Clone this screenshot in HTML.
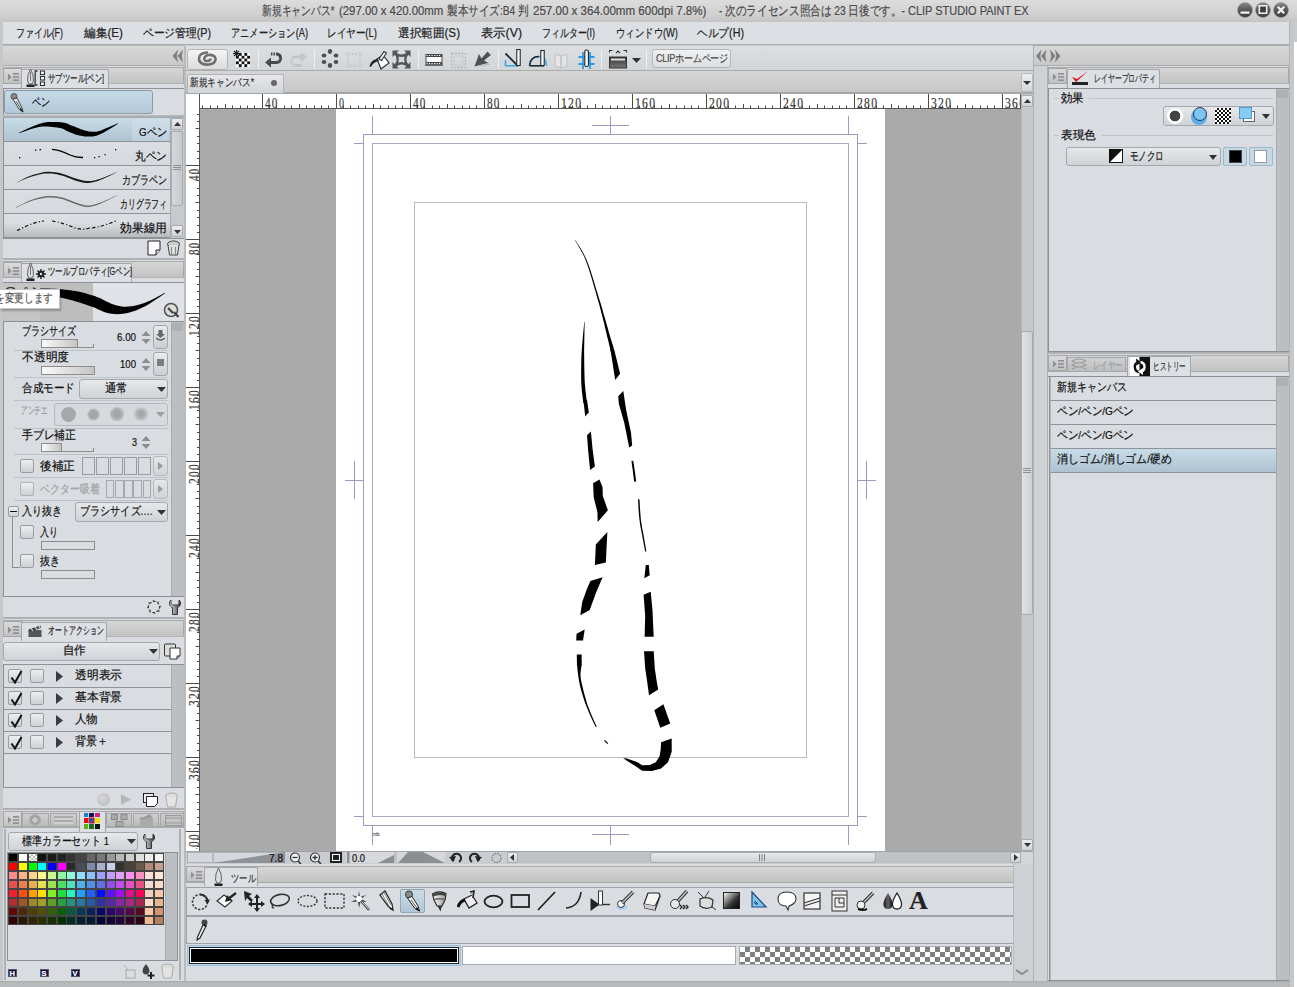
<!DOCTYPE html><html lang="ja"><head><meta charset="utf-8"><style>
*{margin:0;padding:0;box-sizing:border-box}
html,body{width:1297px;height:987px;overflow:hidden;background:#c9cacc}
body{position:relative;font-family:"Liberation Sans",sans-serif;font-size:12px;color:#111}
div,svg{position:absolute}
.t{white-space:nowrap;line-height:1;transform-origin:0 0;-webkit-text-stroke:0.2px currentColor}
.a{position:absolute}
</style></head><body><div style="left:0px;top:0px;width:1297px;height:987px;background:#c9cacc"></div>
<div style="left:0px;top:0px;width:1297px;height:22px;background:linear-gradient(#dcdcdc,#d2d2d2 60%,#c4c4c4)"></div>
<div class="t" style="transform:scaleX(0.7562);left:262.3px;top:5px;--w:72.5;color:#4a4a4a;font-size:12.5px">新規キャンバス*</div>
<div class="t" style="transform:scaleX(0.9097);left:339.4px;top:5px;--w:104.3;color:#4a4a4a;font-size:12.5px">(297.00 x 420.00mm</div>
<div class="t" style="transform:scaleX(0.814);left:447.4px;top:5px;--w:81.6;color:#4a4a4a;font-size:12.5px">製本サイズ:B4 判</div>
<div class="t" style="transform:scaleX(0.9242);left:533px;top:5px;--w:173.4;color:#4a4a4a;font-size:12.5px">257.00 x 364.00mm 600dpi 7.8%)</div>
<div class="t" style="transform:scaleX(0.817);left:718.5px;top:5px;--w:186;color:#4a4a4a;font-size:12.5px">- 次のライセンス照合は 23 日後です。-</div>
<div class="t" style="transform:scaleX(0.8768);left:908.4px;top:5px;--w:120.6;color:#4a4a4a;font-size:12.5px">CLIP STUDIO PAINT EX</div>
<svg style="left:1236.5px;top:2px" width="16" height="16" viewBox="0 0 16 16"><defs><linearGradient id="wbmin" x1="0" y1="0" x2="0" y2="1"><stop offset="0" stop-color="#8a8a8a"/><stop offset="0.45" stop-color="#5a5a5a"/><stop offset="1" stop-color="#3e3e3e"/></linearGradient></defs><circle cx="8" cy="8" r="7.5" fill="url(#wbmin)" stroke="#9a9a9a" stroke-width="0.6"/><rect x="3.5" y="9.5" width="9" height="2.2" fill="#f2f2f2"/></svg>
<svg style="left:1254.5px;top:2px" width="16" height="16" viewBox="0 0 16 16"><defs><linearGradient id="wbmax" x1="0" y1="0" x2="0" y2="1"><stop offset="0" stop-color="#8a8a8a"/><stop offset="0.45" stop-color="#5a5a5a"/><stop offset="1" stop-color="#3e3e3e"/></linearGradient></defs><circle cx="8" cy="8" r="7.5" fill="url(#wbmax)" stroke="#9a9a9a" stroke-width="0.6"/><rect x="4.3" y="3.8" width="7.4" height="7.4" fill="#3c3c3c" stroke="#eee" stroke-width="1.6"/></svg>
<svg style="left:1272.5px;top:2px" width="16" height="16" viewBox="0 0 16 16"><defs><linearGradient id="wbclose" x1="0" y1="0" x2="0" y2="1"><stop offset="0" stop-color="#8a8a8a"/><stop offset="0.45" stop-color="#5a5a5a"/><stop offset="1" stop-color="#3e3e3e"/></linearGradient></defs><circle cx="8" cy="8" r="7.5" fill="url(#wbclose)" stroke="#9a9a9a" stroke-width="0.6"/><path d="M4.8 4.8L11.2 11.2M11.2 4.8L4.8 11.2" stroke="#f2f2f2" stroke-width="2.3"/></svg>
<div style="left:3px;top:22px;width:1286px;height:23px;background:#dcdfe3;border-bottom:1px solid #a9abae"></div>
<div class="t" style="transform:scaleX(0.7422);left:16px;top:27px;--w:47;font-size:12px;color:#222">ファイル(F)</div>
<div class="t" style="transform:scaleX(0.975);left:84px;top:27px;--w:39;font-size:12px;color:#222">編集(E)</div>
<div class="t" style="transform:scaleX(0.8947);left:143px;top:27px;--w:68;font-size:12px;color:#222">ページ管理(P)</div>
<div class="t" style="transform:scaleX(0.77);left:231px;top:27px;--w:77;font-size:12px;color:#222">アニメーション(A)</div>
<div class="t" style="transform:scaleX(0.7978);left:327px;top:27px;--w:50;font-size:12px;color:#222">レイヤー(L)</div>
<div class="t" style="transform:scaleX(0.9688);left:398px;top:27px;--w:62;font-size:12px;color:#222">選択範囲(S)</div>
<div class="t" style="transform:scaleX(1.025);left:481px;top:27px;--w:41;font-size:12px;color:#222">表示(V)</div>
<div class="t" style="transform:scaleX(0.743);left:542px;top:27px;--w:53;font-size:12px;color:#222">フィルター(I)</div>
<div class="t" style="transform:scaleX(0.7816);left:616px;top:27px;--w:62;font-size:12px;color:#222">ウィンドウ(W)</div>
<div class="t" style="transform:scaleX(0.8923);left:697px;top:27px;--w:47;font-size:12px;color:#222">ヘルプ(H)</div>
<div style="left:1294px;top:42px;width:3px;height:945px;background:#fff"></div>
<div style="left:0px;top:22px;width:3px;height:965px;background:#c6c7c9"></div>
<div style="left:3px;top:45px;width:181px;height:1px;background:#b6b8ba"></div>
<div style="left:3px;top:46px;width:181px;height:19px;background:linear-gradient(#d7d7d7,#c9c9c9)"></div>
<div style="left:3px;top:65px;width:181px;height:1px;background:#a9abad"></div>
<svg style="left:172px;top:49px;" width="12" height="14" viewBox="0 0 12 14"><path d="M0.5 7 L6 0.5 L4.8 7 L6 13.5Z M5.5 7 L11 0.5 L9.8 7 L11 13.5Z" fill="#7d7f82"/></svg>
<div style="left:184px;top:46px;width:2px;height:935px;background:#b8babd"></div>
<div style="left:3px;top:66px;width:181px;height:915px;background:#d9dce1"></div>
<div style="left:3px;top:67px;width:181px;height:17px;background:linear-gradient(#d6d6d6,#c2c2c2);border:1px solid #a9a9a9;border-bottom-color:#b4b4b4"></div>
<div style="left:3px;top:68px;width:19px;height:16px;background:linear-gradient(#dadada,#c2c2c2);border:1px solid #a6a6a6"><svg style="left:4px;top:4px;" width="11" height="8" viewBox="0 0 11 8"><path d="M0 0.5L3.5 4L0 7.5Z" fill="#8d8f93"/><rect x="5" y="0" width="6" height="1.6" fill="#8d8f93"/><rect x="5" y="3.2" width="6" height="1.6" fill="#8d8f93"/><rect x="5" y="6.4" width="6" height="1.6" fill="#8d8f93"/></svg></div>
<div style="left:21px;top:69px;width:88px;height:19px;background:#dcdfe3;border:1px solid #a4a6a9;border-bottom:none;border-radius:2px 2px 0 0"></div>
<svg style="left:26px;top:69px;" width="9" height="18" viewBox="0 0 9 18"><path d="M4.5 0 L7 6 L7.5 12 L6 15 L3 15 L1.5 12 L2 6 Z" fill="#ddd" stroke="#555" stroke-width="0.9"/><path d="M4.5 3 L4.5 12" stroke="#777" stroke-width="1"/><rect x="0.5" y="15.5" width="8" height="2.5" fill="#222"/></svg>
<svg style="left:34px;top:70px;" width="12" height="16" viewBox="0 0 12 16"><path d="M3.5 1 H1.2 V15 H3.5" stroke="#333" fill="none" stroke-width="1.3"/><rect x="6.5" y="1" width="4" height="3.5" fill="#fff" stroke="#333" stroke-width="1.1"/><rect x="6.5" y="6.5" width="4" height="3.5" fill="#fff" stroke="#333" stroke-width="1.1"/><rect x="6.5" y="12" width="4" height="3.5" fill="#fff" stroke="#333" stroke-width="1.1"/></svg>
<div class="t" style="transform:scaleX(0.676);left:48px;top:73px;--w:56;font-size:10.5px;color:#222">サブツール[ペン]</div>
<div style="left:3px;top:88px;width:181px;height:1px;background:#8d9195"></div>
<div style="left:3px;top:89px;width:1px;height:150px;background:#8d9195"></div>
<div style="left:4px;top:90px;width:149px;height:24px;background:linear-gradient(#c6d9e6,#b4cad9);border:1px solid #8a9aa6;border-radius:3px"></div>
<svg style="left:10px;top:93px;" width="14" height="20" viewBox="0 0 14 20"><circle cx="4" cy="3.5" r="3" fill="#888" stroke="#444" stroke-width="0.8"/><path d="M3 6 L7 5 L12 15 L13 19 L9 16 Z" fill="#eee" stroke="#333" stroke-width="0.9"/><path d="M6 8 L11 16" stroke="#555" stroke-width="1"/><path d="M11 15 L13.5 19.5 L10 17Z" fill="#111"/></svg>
<div class="t" style="transform:scaleX(0.75);left:32px;top:97px;--w:18;font-size:11.5px;color:#111">ペン</div>
<div style="left:3px;top:115px;width:181px;height:3px;background:linear-gradient(#b9bbbe,#a4a7aa)"></div>
<div style="left:4px;top:118px;width:166px;height:23px;background:linear-gradient(#c8dbe8,#aec2d1)"></div>
<div style="left:132px;top:119px;width:37px;height:22px;background:rgba(220,230,238,0.35)"></div>
<div style="left:4px;top:141px;width:166px;height:1px;background:#8f9397"></div>
<div class="t" style="transform:scaleX(0.8497);left:139px;top:127px;--w:28;font-size:11.5px;color:#111">Gペン</div>
<div style="left:4px;top:142px;width:166px;height:23px;background:linear-gradient(#dadde1,#d6d9dd)"></div>
<div style="left:4px;top:165px;width:166px;height:1px;background:#8f9397"></div>
<div class="t" style="transform:scaleX(0.8889);left:135px;top:151px;--w:32;font-size:11.5px;color:#111">丸ペン</div>
<div style="left:4px;top:166px;width:166px;height:23px;background:linear-gradient(#dadde1,#d6d9dd)"></div>
<div style="left:4px;top:189px;width:166px;height:1px;background:#8f9397"></div>
<div class="t" style="transform:scaleX(0.75);left:122px;top:175px;--w:45;font-size:11.5px;color:#111">カブラペン</div>
<div style="left:4px;top:190px;width:166px;height:23px;background:linear-gradient(#dadde1,#d6d9dd)"></div>
<div style="left:4px;top:213px;width:166px;height:1px;background:#8f9397"></div>
<div class="t" style="transform:scaleX(0.6528);left:120px;top:199px;--w:47;font-size:11.5px;color:#111">カリグラフィ</div>
<div style="left:4px;top:214px;width:166px;height:23px;background:linear-gradient(#dadde1 40%,#b8babd)"></div>
<div style="left:4px;top:237px;width:166px;height:1px;background:#8f9397"></div>
<div class="t" style="transform:scaleX(0.9792);left:120px;top:223px;--w:47;font-size:11.5px;color:#111">効果線用</div>
<svg style="left:0px;top:0px;" width="185" height="260" viewBox="0 0 185 260"><path d="M19.1 133.3 L20.3 132.8 L22.1 132.2 L24.1 131.5 L26.3 130.7 L28.4 130.0 L30.3 129.3 L32.1 128.8 L33.8 128.3 L35.6 127.8 L37.2 127.4 L38.8 127.0 L40.4 126.8 L41.7 126.6 L42.9 126.4 L44.0 126.4 L45.1 126.4 L46.4 126.4 L48.0 126.5 L50.0 126.7 L52.3 126.9 L54.8 127.2 L57.3 127.6 L59.6 127.9 L61.4 128.3 L62.8 128.8 L63.8 129.3 L64.8 129.8 L65.9 130.5 L67.2 131.2 L68.7 131.8 L70.3 132.5 L71.9 133.1 L73.6 133.8 L75.4 134.4 L77.3 135.0 L79.1 135.4 L80.9 135.8 L82.6 136.1 L84.4 136.4 L86.3 136.6 L88.1 136.6 L89.9 136.6 L91.6 136.5 L93.1 136.4 L94.8 136.1 L96.5 135.7 L98.4 135.1 L100.6 134.1 L103.4 132.7 L106.6 130.8 L110.1 128.8 L113.4 126.7 L116.2 125.0 L118.1 123.8 L117.9 123.2 L115.7 124.2 L112.7 125.5 L109.2 127.0 L105.5 128.6 L102.1 129.9 L99.4 130.9 L97.3 131.4 L95.6 131.7 L94.2 131.8 L92.9 131.8 L91.6 131.7 L90.1 131.6 L88.6 131.4 L87.1 131.1 L85.6 130.7 L84.0 130.2 L82.5 129.7 L80.9 129.2 L79.3 128.6 L77.8 128.0 L76.1 127.3 L74.5 126.6 L72.8 126.0 L71.3 125.4 L70.1 124.9 L68.9 124.4 L67.7 123.8 L66.2 123.3 L64.5 122.8 L62.6 122.5 L60.3 122.2 L57.8 122.0 L55.2 122.0 L52.6 121.9 L50.1 122.0 L48.0 122.1 L46.3 122.2 L44.8 122.4 L43.5 122.7 L42.3 123.0 L41.0 123.4 L39.6 123.8 L38.1 124.3 L36.5 124.9 L34.8 125.5 L33.1 126.2 L31.4 126.9 L29.7 127.7 L27.8 128.5 L25.7 129.4 L23.7 130.4 L21.7 131.4 L20.1 132.2 L18.9 132.7Z" fill="#000"/></svg>
<svg style="left:0px;top:0px;" width="185" height="260" viewBox="0 0 185 260"><g fill="#111"><rect x="19" y="157" width="1.3" height="1.3"/><rect x="35" y="149.5" width="1.3" height="1.3"/><rect x="39.5" y="149" width="1.6" height="1.3"/><rect x="94" y="157" width="1.3" height="1.3"/><rect x="98.5" y="156" width="1.3" height="1.3"/><rect x="104.5" y="154" width="1.3" height="1.3"/><rect x="115" y="149" width="1.3" height="1.3"/></g><path d="M52 149.3 C 58 149.5, 64 152, 70 155 C 75 157.3, 79 157.6, 83 157.5" stroke="#000" stroke-width="1.3" fill="none"/></svg>
<svg style="left:0px;top:0px;" width="185" height="260" viewBox="0 0 185 260"><path d="M17.1 182.6 L18.5 182.0 L20.3 181.1 L22.6 180.0 L25.0 178.9 L27.6 177.9 L30.2 177.0 L32.8 176.2 L35.6 175.4 L38.5 174.7 L41.5 174.1 L44.3 173.6 L47.0 173.4 L49.6 173.4 L52.1 173.5 L54.5 173.9 L56.9 174.3 L59.3 174.9 L61.8 175.5 L64.3 176.2 L66.8 177.2 L69.4 178.2 L71.9 179.2 L74.4 180.2 L76.7 181.0 L78.8 181.5 L80.7 182.0 L82.5 182.4 L84.3 182.7 L86.1 182.9 L88.0 182.9 L90.0 182.8 L91.9 182.5 L93.8 182.1 L95.8 181.6 L97.9 180.9 L100.2 180.1 L102.9 178.9 L106.1 177.5 L109.4 175.9 L112.5 174.4 L115.2 173.1 L117.1 172.1 L116.9 171.9 L115.0 172.7 L112.3 173.9 L109.1 175.3 L105.7 176.7 L102.5 178.0 L99.8 178.9 L97.5 179.6 L95.4 180.2 L93.5 180.6 L91.6 180.9 L89.8 181.0 L88.0 181.1 L86.2 181.0 L84.5 180.8 L82.9 180.5 L81.2 180.1 L79.3 179.6 L77.3 179.0 L75.1 178.3 L72.7 177.4 L70.1 176.4 L67.5 175.4 L64.8 174.5 L62.2 173.7 L59.7 173.1 L57.2 172.6 L54.8 172.2 L52.2 171.9 L49.6 171.7 L47.0 171.8 L44.1 172.1 L41.2 172.7 L38.2 173.4 L35.3 174.2 L32.5 175.1 L29.8 176.0 L27.3 177.0 L24.7 178.2 L22.3 179.5 L20.1 180.7 L18.3 181.7 L16.9 182.4Z" fill="#1a1a1a"/></svg>
<svg style="left:0px;top:0px;" width="185" height="260" viewBox="0 0 185 260"><path d="M16.1 207.7 L17.6 207.0 L19.6 206.0 L22.1 204.8 L24.8 203.6 L27.5 202.4 L30.2 201.5 L32.9 200.6 L35.7 199.8 L38.6 199.0 L41.5 198.4 L44.4 197.9 L47.1 197.5 L49.6 197.4 L52.1 197.5 L54.5 197.7 L57.0 198.0 L59.4 198.5 L61.8 199.0 L64.3 199.7 L66.9 200.7 L69.5 201.7 L72.0 202.8 L74.5 203.8 L76.7 204.6 L78.8 205.2 L80.7 205.8 L82.5 206.3 L84.3 206.8 L86.1 207.0 L88.0 207.0 L90.0 206.9 L91.8 206.6 L93.7 206.1 L95.7 205.5 L97.8 204.7 L100.2 203.8 L103.1 202.6 L106.4 201.0 L109.9 199.3 L113.2 197.6 L116.1 196.1 L118.1 195.1 L117.9 194.9 L115.9 195.8 L113.0 197.1 L109.6 198.7 L106.0 200.2 L102.7 201.7 L99.8 202.8 L97.4 203.6 L95.3 204.3 L93.4 204.8 L91.6 205.2 L89.8 205.5 L88.0 205.6 L86.2 205.5 L84.6 205.2 L82.9 204.8 L81.2 204.3 L79.3 203.7 L77.3 203.0 L75.0 202.3 L72.6 201.3 L70.0 200.3 L67.4 199.2 L64.8 198.3 L62.2 197.6 L59.7 197.0 L57.2 196.5 L54.7 196.2 L52.2 196.0 L49.6 195.9 L46.9 196.1 L44.1 196.4 L41.2 197.0 L38.3 197.8 L35.3 198.6 L32.5 199.6 L29.8 200.5 L27.2 201.6 L24.4 202.9 L21.8 204.2 L19.4 205.5 L17.4 206.6 L15.9 207.3Z" fill="#6a6a6a"/></svg>
<svg style="left:0px;top:0px;" width="185" height="260" viewBox="0 0 185 260"><path d="M17 230.5 C 25 227, 33 222, 44 221 M52 221 C 60 222, 68 225, 75 228 C 80 229.5, 85 229.5, 90 228 M92 228 C 100 227, 108 224, 116 221" stroke="#111" stroke-width="1.2" fill="none" stroke-dasharray="3.5 2.2 1.2 2"/></svg>
<div style="left:170px;top:118px;width:14px;height:120px;background:#c7cacd;border-left:1px solid #a9acaf"></div>
<div style="left:171px;top:118px;width:12px;height:12px;background:linear-gradient(#eceef0,#cfd2d5);border:1px solid #a9acaf;border-radius:2px"></div>
<svg style="left:174px;top:122px;" width="7" height="4" viewBox="0 0 7 4"><path d="M0 4H7L3.5 0Z" fill="#333"/></svg>
<div style="left:171px;top:131px;width:12px;height:75px;background:linear-gradient(90deg,#d6d9dc,#c6c9cc);border:1px solid #a9acaf;border-radius:2px"></div>
<svg style="left:173px;top:165px;" width="8" height="6" viewBox="0 0 8 6"><path d="M0 0.5H8M0 2.5H8M0 4.5H8" stroke="#888" stroke-width="0.9"/></svg>
<div style="left:171px;top:225px;width:12px;height:12px;background:linear-gradient(#eceef0,#cfd2d5);border:1px solid #a9acaf;border-radius:2px"></div>
<svg style="left:174px;top:230px;" width="7" height="4" viewBox="0 0 7 4"><path d="M0 0H7L3.5 4Z" fill="#333"/></svg>
<div style="left:3px;top:238px;width:181px;height:1px;background:#8f9397"></div>
<svg style="left:147px;top:240px;" width="14" height="16" viewBox="0 0 14 16"><path d="M1 1H13V10L9 15H1Z" fill="#fff" stroke="#222" stroke-width="1"/><path d="M13 10H9V15" fill="#ddd" stroke="#222" stroke-width="1"/></svg>
<svg style="left:166px;top:240px;" width="15" height="16" viewBox="0 0 15 16"><ellipse cx="7.5" cy="4" rx="6" ry="3" fill="#ccc" stroke="#444"/><path d="M2 5 L3.5 15 H11.5 L13 5" fill="#ddd" stroke="#444"/><path d="M5.5 7V14M9.5 7V14" stroke="#888"/></svg>
<div style="left:3px;top:258px;width:181px;height:2px;background:#aeb1b4"></div>
<div style="left:3px;top:261px;width:181px;height:17px;background:linear-gradient(#d6d6d6,#c2c2c2);border:1px solid #a9a9a9;border-bottom-color:#b4b4b4"></div>
<div style="left:3px;top:262px;width:19px;height:16px;background:linear-gradient(#dadada,#c2c2c2);border:1px solid #a6a6a6"><svg style="left:4px;top:4px;" width="11" height="8" viewBox="0 0 11 8"><path d="M0 0.5L3.5 4L0 7.5Z" fill="#8d8f93"/><rect x="5" y="0" width="6" height="1.6" fill="#8d8f93"/><rect x="5" y="3.2" width="6" height="1.6" fill="#8d8f93"/><rect x="5" y="6.4" width="6" height="1.6" fill="#8d8f93"/></svg></div>
<div style="left:21px;top:263px;width:111px;height:19px;background:#dcdfe3;border:1px solid #a4a6a9;border-bottom:none;border-radius:2px 2px 0 0"></div>
<svg style="left:26px;top:263px;" width="9" height="18" viewBox="0 0 9 18"><path d="M4.5 0 L7 6 L7.5 12 L6 15 L3 15 L1.5 12 L2 6 Z" fill="#ddd" stroke="#555" stroke-width="0.9"/><path d="M4.5 3 L4.5 12" stroke="#777" stroke-width="1"/><rect x="0.5" y="15.5" width="8" height="2.5" fill="#222"/></svg>
<svg style="left:36px;top:269px;" width="10" height="10" viewBox="0 0 10 10"><circle cx="5" cy="5" r="3.2" fill="#222"/><path d="M5 0V10M0 5H10M1.5 1.5L8.5 8.5M8.5 1.5L1.5 8.5" stroke="#222" stroke-width="1.4"/><circle cx="5" cy="5" r="1.2" fill="#ddd"/></svg>
<div class="t" style="transform:scaleX(0.6773);left:48px;top:266px;--w:84;font-size:10.5px;color:#222">ツールプロパティ[Gペン]</div>
<div style="left:3px;top:282px;width:181px;height:1px;background:#8d9195"></div>
<div style="left:3px;top:283px;width:181px;height:39px;background:#dfe2e6"></div>
<div style="left:3px;top:283px;width:90px;height:39px;background:#bdbdbd"></div>
<div style="left:3px;top:283px;width:37px;height:39px;background:#c4c4c4"></div>
<svg style="left:0px;top:280px;" width="185" height="45" viewBox="0 280 185 45"><path d="M39.7 293.5 L41.7 293.9 L44.3 294.4 L47.5 295.0 L50.9 295.6 L54.3 296.3 L57.4 297.0 L60.5 297.6 L63.6 298.3 L66.7 299.0 L69.8 299.8 L72.8 300.5 L75.8 301.4 L78.8 302.2 L81.7 303.2 L84.7 304.2 L87.6 305.2 L90.4 306.2 L93.0 307.1 L95.5 308.1 L97.8 309.2 L100.2 310.3 L102.9 311.5 L105.7 312.5 L108.7 313.3 L111.5 313.8 L114.4 314.1 L117.3 314.2 L120.3 314.1 L123.3 313.8 L126.4 313.2 L129.5 312.5 L132.7 311.5 L135.9 310.4 L139.2 309.0 L142.4 307.6 L145.7 306.0 L149.1 304.0 L152.9 301.6 L156.6 299.1 L160.1 296.7 L163.0 294.7 L165.1 293.2 L164.9 292.8 L162.6 294.0 L159.5 295.7 L155.8 297.7 L151.8 299.7 L147.9 301.6 L144.3 303.0 L141.1 304.1 L137.8 305.0 L134.6 305.8 L131.5 306.3 L128.5 306.6 L125.6 306.8 L123.0 306.7 L120.6 306.3 L118.2 305.8 L115.9 305.2 L113.6 304.5 L111.3 303.7 L109.3 302.8 L107.2 301.8 L105.0 300.7 L102.6 299.4 L99.9 298.1 L97.0 296.9 L94.0 295.8 L90.9 294.9 L87.8 294.0 L84.6 293.1 L81.4 292.3 L78.2 291.6 L74.9 291.0 L71.6 290.5 L68.3 290.0 L65.0 289.7 L61.8 289.3 L58.6 289.0 L55.2 288.8 L51.6 288.7 L48.1 288.6 L44.9 288.6 L42.2 288.5 L40.3 288.5Z" fill="#000"/></svg>
<div class="t" style="transform:scaleX(1.3088);left:5px;top:286px;--w:40;font-size:11px;color:#222">Gペン</div>
<svg style="left:163px;top:302px;" width="17" height="17" viewBox="0 0 17 17"><circle cx="8" cy="8" r="6.5" fill="#ddd" stroke="#555" stroke-width="1.6"/><path d="M5 6 L10 11 M11 10 L15.5 15" stroke="#444" stroke-width="2.2"/></svg>
<div style="left:0px;top:289px;width:60px;height:20px;background:#fff;border:1px solid #c4c6c9;border-left:none;box-shadow:1px 2px 2px rgba(0,0,0,0.25)"></div>
<div class="t" style="transform:scaleX(0.8056);left:-5px;top:293px;--w:58;font-size:11.5px;color:#555">を変更します</div>
<div style="left:3px;top:321px;width:181px;height:1px;background:#8d9195"></div>
<div style="left:3px;top:322px;width:1px;height:274px;background:#8d9195"></div>
<div style="left:171px;top:322px;width:13px;height:274px;background:#bcbfc2;border-left:1px solid #a9acaf"></div>
<div style="left:172px;top:323px;width:11px;height:8px;background:#aeb1b4"></div>
<div class="t" style="transform:scaleX(0.75);left:22px;top:326px;--w:54;font-size:11.5px">ブラシサイズ</div>
<div style="left:41px;top:339px;width:37px;height:9px;background:linear-gradient(90deg,#fbfbfb,#c4c4c4);border:1px solid #8c8c8c;border-bottom:none"></div>
<div style="left:41px;top:347px;width:53px;height:1px;background:#8c8c8c"></div>
<div style="left:93px;top:344px;width:1px;height:4px;background:#8c8c8c"></div>
<div class="t" style="transform:scaleX(0.8869);left:117px;top:332px;--w:19;font-size:11px">6.00</div>
<svg style="left:141px;top:330px;" width="10" height="15" viewBox="0 0 10 15"><path d="M0.5 6H9.5L5 1Z M0.5 9H9.5L5 14Z" fill="#8c8e91"/></svg>
<div style="left:153px;top:325px;width:15px;height:24px;background:linear-gradient(#e8eaed,#cbced2);border:1px solid #a4a7ab;border-radius:3px"></div>
<svg style="left:155px;top:330px;" width="11" height="12" viewBox="0 0 11 12"><path d="M3.5 0H7.5V4H10L5.5 8L1 4H3.5Z" fill="#666"/><path d="M1 8 Q5.5 12 10 8" stroke="#666" stroke-width="1.3" fill="none"/></svg>
<div style="left:14px;top:350px;width:155px;height:1px;background:#bfc2c6"></div>
<div class="t" style="transform:scaleX(0.9792);left:22px;top:352px;--w:47;font-size:11.5px">不透明度</div>
<div style="left:41px;top:366px;width:54px;height:9px;background:linear-gradient(90deg,#fbfbfb,#c4c4c4);border:1px solid #8c8c8c"></div>
<div class="t" style="transform:scaleX(0.8715);left:120px;top:359px;--w:16;font-size:11px">100</div>
<svg style="left:141px;top:357px;" width="10" height="15" viewBox="0 0 10 15"><path d="M0.5 6H9.5L5 1Z M0.5 9H9.5L5 14Z" fill="#8c8e91"/></svg>
<div style="left:153px;top:352px;width:15px;height:24px;background:linear-gradient(#e8eaed,#cbced2);border:1px solid #a4a7ab;border-radius:3px"></div>
<div style="left:157px;top:359px;width:7px;height:7px;background:#7c7e81"></div>
<div style="left:14px;top:377px;width:155px;height:1px;background:#bfc2c6"></div>
<div class="t" style="transform:scaleX(0.8833);left:22px;top:383px;--w:53;font-size:11.5px">合成モード</div>
<div style="left:79px;top:379px;width:89px;height:20px;background:linear-gradient(#e6e8eb,#cfd2d6);border:1px solid #a4a7ab;border-radius:3px"></div>
<svg style="left:157px;top:387px;" width="9" height="5" viewBox="0 0 9 5"><path d="M0 0H9L4.5 5Z" fill="#333"/></svg>
<div class="t" style="transform:scaleX(0.9583);left:105px;top:383px;--w:23;font-size:11.5px">通常</div>
<div style="left:14px;top:400px;width:155px;height:1px;background:#bfc2c6"></div>
<div class="t" style="transform:scaleX(0.6136);left:21px;top:405px;--w:27;font-size:11px;color:#9a9ca0">アンチエ</div>
<div style="left:54px;top:403px;width:114px;height:23px;background:#d6d9dd;border:1px solid #b5b8bc;border-radius:3px"></div>
<div style="left:61px;top:407px;width:15px;height:15px;border-radius:50%;background:#a6a8ab"></div>
<div style="left:86px;top:407px;width:15px;height:15px;border-radius:50%;background:radial-gradient(circle,#a4a6a9 0 4.6px,#c6c8cb 5.6px,#d6d8db 7.5px)"></div>
<div style="left:109px;top:406px;width:16px;height:16px;border-radius:50%;background:radial-gradient(circle,#a3a5a8 0 3.5px,#b2b4b7 4.5px,#a9abae 5.5px,#c4c6c9 6.5px,#d6d8db 8px)"></div>
<div style="left:133px;top:406px;width:16px;height:16px;border-radius:50%;background:radial-gradient(circle,#a6a8ab 0 2.5px,#b6b8bb 5px,#c9cbce 6.5px,#d6d8db 8px)"></div>
<svg style="left:156px;top:412px;" width="9" height="5" viewBox="0 0 9 5"><path d="M0 0H9L4.5 5Z" fill="#9a9ca0"/></svg>
<div style="left:14px;top:428px;width:155px;height:1px;background:#bfc2c6"></div>
<div class="t" style="transform:scaleX(0.9);left:22px;top:430px;--w:54;font-size:11.5px">手ブレ補正</div>
<div style="left:41px;top:443px;width:21px;height:9px;background:linear-gradient(90deg,#fbfbfb,#c4c4c4);border:1px solid #8c8c8c;border-bottom:none"></div>
<div style="left:41px;top:451px;width:53px;height:1px;background:#8c8c8c"></div>
<div style="left:93px;top:448px;width:1px;height:4px;background:#8c8c8c"></div>
<div class="t" style="transform:scaleX(0.8163);left:132px;top:437px;--w:5;font-size:11px">3</div>
<svg style="left:141px;top:435px;" width="10" height="15" viewBox="0 0 10 15"><path d="M0.5 6H9.5L5 1Z M0.5 9H9.5L5 14Z" fill="#8c8e91"/></svg>
<div style="left:14px;top:454px;width:155px;height:1px;background:#bfc2c6"></div>
<div style="left:20px;top:459px;width:14px;height:14px;background:linear-gradient(#eceef1,#cdd0d4);border:1px solid #999c9f;border-radius:2px"></div>
<div class="t" style="transform:scaleX(0.9722);left:40px;top:461px;--w:35;font-size:11.5px">後補正</div>
<div style="left:82px;top:457px;width:13px;height:18px;border:1px solid #989b9f"></div>
<div style="left:96px;top:457px;width:13px;height:18px;border:1px solid #989b9f"></div>
<div style="left:110px;top:457px;width:13px;height:18px;border:1px solid #989b9f"></div>
<div style="left:124px;top:457px;width:13px;height:18px;border:1px solid #989b9f"></div>
<div style="left:138px;top:457px;width:13px;height:18px;border:1px solid #989b9f"></div>
<div style="left:153px;top:456px;width:15px;height:20px;background:linear-gradient(#e4e6e9,#d0d3d7);border:1px solid #b5b8bc;border-radius:3px"></div>
<svg style="left:158px;top:462px;" width="5" height="8" viewBox="0 0 5 8"><path d="M0 0V8L5 4Z" fill="#999"/></svg>
<div style="left:14px;top:477px;width:155px;height:1px;background:#bfc2c6"></div>
<div style="left:20px;top:482px;width:14px;height:14px;background:linear-gradient(#eceef1,#cdd0d4);border:1px solid #b0b2b5;border-radius:2px"></div>
<div class="t" style="transform:scaleX(0.8333);left:40px;top:484px;--w:60;font-size:11.5px;color:#a0a2a6">ベクター吸着</div>
<div style="left:105.5px;top:480px;width:8.8px;height:18px;border:1px solid #a4a7ab"></div>
<div style="left:114.8px;top:480px;width:8.8px;height:18px;border:1px solid #a4a7ab"></div>
<div style="left:124.1px;top:480px;width:8.8px;height:18px;border:1px solid #a4a7ab"></div>
<div style="left:133.4px;top:480px;width:8.8px;height:18px;border:1px solid #a4a7ab"></div>
<div style="left:142.7px;top:480px;width:8.8px;height:18px;border:1px solid #a4a7ab"></div>
<div style="left:153px;top:479px;width:15px;height:20px;background:linear-gradient(#e4e6e9,#d0d3d7);border:1px solid #b5b8bc;border-radius:3px"></div>
<svg style="left:158px;top:485px;" width="5" height="8" viewBox="0 0 5 8"><path d="M0 0V8L5 4Z" fill="#999"/></svg>
<div style="left:14px;top:500px;width:155px;height:1px;background:#bfc2c6"></div>
<div style="left:8px;top:506px;width:11px;height:11px;background:linear-gradient(#eceef1,#cdd0d4);border:1px solid #999c9f;border-radius:2px"></div>
<div style="left:10px;top:511px;width:7px;height:1px;background:#111"></div>
<div class="t" style="transform:scaleX(0.8333);left:22px;top:506px;--w:40;font-size:11.5px">入り抜き</div>
<div style="left:75px;top:502px;width:93px;height:20px;background:linear-gradient(#e6e8eb,#cfd2d6);border:1px solid #a4a7ab;border-radius:3px"></div>
<svg style="left:157px;top:510px;" width="9" height="5" viewBox="0 0 9 5"><path d="M0 0H9L4.5 5Z" fill="#333"/></svg>
<div class="t" style="transform:scaleX(0.842);left:80px;top:506px;--w:73;font-size:11.5px">ブラシサイズ.…</div>
<div style="left:12px;top:517px;width:1px;height:51px;background:#8c8e91"></div>
<div style="left:12px;top:567px;width:8px;height:1px;background:#8c8e91"></div>
<div style="left:20px;top:525px;width:14px;height:14px;background:linear-gradient(#eceef1,#cdd0d4);border:1px solid #999c9f;border-radius:2px"></div>
<div class="t" style="transform:scaleX(0.75);left:40px;top:527px;--w:18;font-size:11.5px">入り</div>
<div style="left:41px;top:541px;width:54px;height:9px;border:1px solid #8c8c8c;background:#d9dce1"></div>
<div style="left:20px;top:554px;width:14px;height:14px;background:linear-gradient(#eceef1,#cdd0d4);border:1px solid #999c9f;border-radius:2px"></div>
<div class="t" style="transform:scaleX(0.8333);left:40px;top:556px;--w:20;font-size:11.5px">抜き</div>
<div style="left:41px;top:570px;width:54px;height:9px;border:1px solid #8c8c8c;background:#d9dce1"></div>
<div style="left:3px;top:596px;width:181px;height:1px;background:#8d9195"></div>
<svg style="left:146px;top:599px;" width="16" height="16" viewBox="0 0 16 16"><path d="M6.72 0.71 L7.13 3.08 L10.63 3.06Z" fill="#3a3a3a"/><path d="M12.24 1.94 L10.87 3.90 L13.36 6.36Z" fill="#3a3a3a"/><path d="M15.29 6.72 L12.92 7.13 L12.94 10.63Z" fill="#3a3a3a"/><path d="M14.06 12.24 L12.10 10.87 L9.64 13.36Z" fill="#3a3a3a"/><path d="M9.28 15.29 L8.87 12.92 L5.37 12.94Z" fill="#3a3a3a"/><path d="M3.76 14.06 L5.13 12.10 L2.64 9.64Z" fill="#3a3a3a"/><path d="M0.71 9.28 L3.08 8.87 L3.06 5.37Z" fill="#3a3a3a"/><path d="M1.94 3.76 L3.90 5.13 L6.36 2.64Z" fill="#3a3a3a"/></svg>
<svg style="left:168px;top:599px;" width="15" height="17" viewBox="0 0 15 17"><defs><linearGradient id="wr2" x1="0" x2="1"><stop offset="0" stop-color="#e8e8e8"/><stop offset="0.45" stop-color="#999"/><stop offset="1" stop-color="#333"/></linearGradient></defs><path d="M3 1 C0.8 3 0.8 7.2 4.5 8.6 V15.5 H9.5 V8.6 C13.2 7.2 13.2 3 11 1 V4.6 L9.6 6 H4.4 L3 4.6Z" fill="url(#wr2)" stroke="#2a2a2a" stroke-width="0.9"/></svg>
<div style="left:3px;top:617px;width:181px;height:2px;background:#aeb1b4"></div>
<div style="left:3px;top:620px;width:181px;height:17px;background:linear-gradient(#d6d6d6,#c2c2c2);border:1px solid #a9a9a9;border-bottom-color:#b4b4b4"></div>
<div style="left:3px;top:621px;width:19px;height:16px;background:linear-gradient(#dadada,#c2c2c2);border:1px solid #a6a6a6"><svg style="left:4px;top:4px;" width="11" height="8" viewBox="0 0 11 8"><path d="M0 0.5L3.5 4L0 7.5Z" fill="#8d8f93"/><rect x="5" y="0" width="6" height="1.6" fill="#8d8f93"/><rect x="5" y="3.2" width="6" height="1.6" fill="#8d8f93"/><rect x="5" y="6.4" width="6" height="1.6" fill="#8d8f93"/></svg></div>
<div style="left:21px;top:622px;width:86px;height:19px;background:#dcdfe3;border:1px solid #a4a6a9;border-bottom:none;border-radius:2px 2px 0 0"></div>
<svg style="left:28px;top:625px;" width="14" height="12" viewBox="0 0 14 12"><rect x="0.5" y="5" width="13" height="7" fill="#555"/><path d="M0.5 4.5 L12.5 0.5 L13 3 L1 7Z" fill="#444"/><path d="M3 3.5L5 6M7 2L9 4.5M11 1L12 3" stroke="#ddd" stroke-width="1.2"/></svg>
<div class="t" style="transform:scaleX(0.6364);left:48px;top:625px;--w:56;font-size:10.5px;color:#222">オートアクション</div>
<div style="left:3px;top:642px;width:157px;height:19px;background:linear-gradient(#e6e8eb,#cfd2d6);border:1px solid #a4a7ab;border-radius:3px"></div>
<svg style="left:149px;top:649px;" width="9" height="5" viewBox="0 0 9 5"><path d="M0 0H9L4.5 5Z" fill="#333"/></svg>
<div class="t" style="transform:scaleX(0.9583);left:63px;top:645px;--w:23;font-size:11.5px">自作</div>
<svg style="left:164px;top:643px;" width="18" height="17" viewBox="0 0 18 17"><rect x="0.5" y="1" width="11" height="12" fill="#ddd" stroke="#333" rx="1"/><path d="M6 5H16V13L13 16H6Z" fill="#fff" stroke="#333"/><path d="M16 13H13V16" fill="#ccc" stroke="#333"/></svg>
<div style="left:3px;top:664px;width:181px;height:1px;background:#8d9195"></div>
<div style="left:3px;top:665px;width:1px;height:122px;background:#8d9195"></div>
<div style="left:171px;top:665px;width:13px;height:122px;background:#bcbfc2;border-left:1px solid #a9acaf"></div>
<div style="left:8px;top:669px;width:14px;height:14px;background:linear-gradient(#eceef1,#cdd0d4);border:1px solid #999c9f;border-radius:2px"><svg style="left:1px;top:0px;" width="13" height="14" viewBox="0 0 13 14"><path d="M1.5 7.5 L5 12.5 L11.5 1" stroke="#111" stroke-width="2" fill="none"/></svg></div>
<div style="left:30px;top:669px;width:14px;height:14px;background:linear-gradient(#eceef1,#cdd0d4);border:1px solid #999c9f;border-radius:2px"></div>
<svg style="left:56px;top:671px;" width="7" height="11" viewBox="0 0 7 11"><path d="M0 0V11L7 5.5Z" fill="#3a3d42"/></svg>
<div class="t" style="transform:scaleX(0.9792);left:75px;top:670px;--w:47;font-size:11.5px">透明表示</div>
<div style="left:4px;top:687px;width:167px;height:1px;background:#8f9397"></div>
<div style="left:8px;top:691px;width:14px;height:14px;background:linear-gradient(#eceef1,#cdd0d4);border:1px solid #999c9f;border-radius:2px"><svg style="left:1px;top:0px;" width="13" height="14" viewBox="0 0 13 14"><path d="M1.5 7.5 L5 12.5 L11.5 1" stroke="#111" stroke-width="2" fill="none"/></svg></div>
<div style="left:30px;top:691px;width:14px;height:14px;background:linear-gradient(#eceef1,#cdd0d4);border:1px solid #999c9f;border-radius:2px"></div>
<svg style="left:56px;top:693px;" width="7" height="11" viewBox="0 0 7 11"><path d="M0 0V11L7 5.5Z" fill="#3a3d42"/></svg>
<div class="t" style="transform:scaleX(0.9792);left:75px;top:692px;--w:47;font-size:11.5px">基本背景</div>
<div style="left:4px;top:709px;width:167px;height:1px;background:#8f9397"></div>
<div style="left:8px;top:713px;width:14px;height:14px;background:linear-gradient(#eceef1,#cdd0d4);border:1px solid #999c9f;border-radius:2px"><svg style="left:1px;top:0px;" width="13" height="14" viewBox="0 0 13 14"><path d="M1.5 7.5 L5 12.5 L11.5 1" stroke="#111" stroke-width="2" fill="none"/></svg></div>
<div style="left:30px;top:713px;width:14px;height:14px;background:linear-gradient(#eceef1,#cdd0d4);border:1px solid #999c9f;border-radius:2px"></div>
<svg style="left:56px;top:715px;" width="7" height="11" viewBox="0 0 7 11"><path d="M0 0V11L7 5.5Z" fill="#3a3d42"/></svg>
<div class="t" style="transform:scaleX(0.9583);left:75px;top:714px;--w:23;font-size:11.5px">人物</div>
<div style="left:4px;top:731px;width:167px;height:1px;background:#8f9397"></div>
<div style="left:8px;top:735px;width:14px;height:14px;background:linear-gradient(#eceef1,#cdd0d4);border:1px solid #999c9f;border-radius:2px"><svg style="left:1px;top:0px;" width="13" height="14" viewBox="0 0 13 14"><path d="M1.5 7.5 L5 12.5 L11.5 1" stroke="#111" stroke-width="2" fill="none"/></svg></div>
<div style="left:30px;top:735px;width:14px;height:14px;background:linear-gradient(#eceef1,#cdd0d4);border:1px solid #999c9f;border-radius:2px"></div>
<svg style="left:56px;top:737px;" width="7" height="11" viewBox="0 0 7 11"><path d="M0 0V11L7 5.5Z" fill="#3a3d42"/></svg>
<div class="t" style="transform:scaleX(0.9167);left:75px;top:736px;--w:33;font-size:11.5px">背景＋</div>
<div style="left:4px;top:753px;width:167px;height:1px;background:#8f9397"></div>
<div style="left:3px;top:787px;width:181px;height:1px;background:#8d9195"></div>
<div style="left:97px;top:793px;width:13px;height:13px;border-radius:50%;background:radial-gradient(circle at 40% 35%,#d8d8d8,#b4b4b4)"></div>
<svg style="left:121px;top:794px;" width="10" height="11" viewBox="0 0 10 11"><path d="M0 0V11L10 5.5Z" fill="#b5b7ba"/></svg>
<svg style="left:143px;top:793px;" width="15" height="14" viewBox="0 0 15 14"><rect x="0.5" y="0.5" width="10" height="9" fill="#eee" stroke="#222"/><path d="M3.5 3.5H14.5V10.5L11.5 13.5H3.5Z" fill="#fff" stroke="#222"/></svg>
<svg style="left:164px;top:792px;" width="15" height="16" viewBox="0 0 15 16"><ellipse cx="7.5" cy="4" rx="6" ry="3" fill="#ddd" stroke="#aaa"/><path d="M2 5 L3.5 15 H11.5 L13 5" fill="#e4e4e4" stroke="#aaa"/></svg>
<div style="left:3px;top:808px;width:181px;height:2px;background:#aeb1b4"></div>
<div style="left:3px;top:811px;width:181px;height:16px;background:linear-gradient(#d6d6d6,#c2c2c2);border:1px solid #a9a9a9"></div>
<div style="left:3px;top:811px;width:19px;height:16px;background:linear-gradient(#dadada,#c2c2c2);border:1px solid #a6a6a6"><svg style="left:4px;top:4px;" width="11" height="8" viewBox="0 0 11 8"><path d="M0 0.5L3.5 4L0 7.5Z" fill="#8d8f93"/><rect x="5" y="0" width="6" height="1.6" fill="#8d8f93"/><rect x="5" y="3.2" width="6" height="1.6" fill="#8d8f93"/><rect x="5" y="6.4" width="6" height="1.6" fill="#8d8f93"/></svg></div>
<div style="left:22px;top:813px;width:27px;height:14px;background:linear-gradient(#cfcfcf,#bababa);border:1px solid #a4a6a9"></div>
<div style="left:50px;top:813px;width:27px;height:14px;background:linear-gradient(#cfcfcf,#bababa);border:1px solid #a4a6a9"></div>
<div style="left:3px;top:827px;width:181px;height:1px;background:#a9abad"></div>
<div style="left:79px;top:811px;width:27px;height:21px;background:#dcdfe3;border:1px solid #a4a6a9;border-bottom:none"></div>
<div style="left:106px;top:813px;width:26px;height:14px;background:linear-gradient(#cfcfcf,#bababa);border:1px solid #a4a6a9"></div>
<div style="left:133px;top:813px;width:26px;height:14px;background:linear-gradient(#cfcfcf,#bababa);border:1px solid #a4a6a9"></div>
<div style="left:160px;top:813px;width:24px;height:14px;background:linear-gradient(#cfcfcf,#bababa);border:1px solid #a4a6a9"></div>
<div style="left:29px;top:814px;width:12px;height:12px;border-radius:50%;background:radial-gradient(#c8c8c8 30%,#9a9a9a 35%,#b0b0b0 70%)"></div>
<div style="left:54px;top:816px;width:19px;height:8px;background:repeating-linear-gradient(#aaa 0 2px,#d0d0d0 2px 4px)"></div>
<svg style="left:84px;top:813px;" width="16" height="16" viewBox="0 0 16 16"><rect x="0" y="0" width="4" height="4" fill="#1e7fd8"/><rect x="5" y="0" width="5" height="4" fill="#101060"/><rect x="11" y="0" width="5" height="4" fill="#d0207a"/><rect x="0" y="5" width="4" height="5" fill="#e01010"/><rect x="5" y="5" width="5" height="5" fill="#2050d0" stroke="#e01010" stroke-width="1"/><rect x="11" y="5" width="5" height="5" fill="#f0e000"/><rect x="0" y="11" width="4" height="5" fill="#60b010"/><rect x="5" y="11" width="5" height="5" fill="#107020"/><rect x="11" y="11" width="5" height="5" fill="#111"/></svg>
<svg style="left:111px;top:814px;" width="17" height="13" viewBox="0 0 17 13"><rect x="0.5" y="0.5" width="6" height="5" fill="#aaa" stroke="#888"/><rect x="10" y="0.5" width="6" height="5" fill="#aaa" stroke="#888"/><rect x="5" y="7.5" width="7" height="5" fill="#aaa" stroke="#888"/></svg>
<svg style="left:138px;top:814px;" width="16" height="13" viewBox="0 0 16 13"><rect x="2" y="3" width="13" height="10" fill="#aaa"/><path d="M0 6 L12 0 L14 3Z" fill="#999"/></svg>
<svg style="left:165px;top:815px;" width="17" height="11" viewBox="0 0 17 11"><rect x="0.5" y="0.5" width="16" height="10" fill="#c4c4c4" stroke="#999"/><path d="M0 3H17M0 8H17" stroke="#999"/></svg>
<div style="left:4px;top:829px;width:2px;height:151px;background:#aeb1b4"></div>
<div style="left:179px;top:829px;width:2px;height:151px;background:#aeb1b4"></div>
<div style="left:8px;top:832px;width:130px;height:19px;background:linear-gradient(#e6e8eb,#cfd2d6);border:1px solid #a4a7ab;border-radius:3px"></div>
<svg style="left:127px;top:839px;" width="9" height="5" viewBox="0 0 9 5"><path d="M0 0H9L4.5 5Z" fill="#333"/></svg>
<div class="t" style="transform:scaleX(0.8239);left:22px;top:836px;--w:87;font-size:11.5px">標準カラーセット 1</div>
<svg style="left:142px;top:833px;" width="15" height="17" viewBox="0 0 15 17"><defs><linearGradient id="wr1" x1="0" x2="1"><stop offset="0" stop-color="#e8e8e8"/><stop offset="0.45" stop-color="#999"/><stop offset="1" stop-color="#333"/></linearGradient></defs><path d="M3 1 C0.8 3 0.8 7.2 4.5 8.6 V15.5 H9.5 V8.6 C13.2 7.2 13.2 3 11 1 V4.6 L9.6 6 H4.4 L3 4.6Z" fill="url(#wr1)" stroke="#2a2a2a" stroke-width="0.9"/></svg>
<div style="left:7px;top:852px;width:171px;height:109px;background:#d9dce1;border:1px solid #8d9195"></div>
<div style="left:165px;top:853px;width:12px;height:107px;background:#bcbfc2;border-left:1px solid #a9acaf"></div>
<div style="left:8px;top:853px;width:10px;height:9px;background:#000;border:1px solid #444"></div>
<div style="left:18px;top:853px;width:10px;height:9px;background:#fff;border:1px solid #444"></div>
<div style="left:28px;top:853px;width:10px;height:9px;background:repeating-conic-gradient(#bbb 0 25%,#fff 0 50%) 0 0/4px 4px;border:1px solid #444"></div>
<div style="left:37px;top:853px;width:10px;height:9px;background:#111;border:1px solid #444"></div>
<div style="left:47px;top:853px;width:10px;height:9px;background:#1b1b1b;border:1px solid #444"></div>
<div style="left:57px;top:853px;width:10px;height:9px;background:#222;border:1px solid #444"></div>
<div style="left:66px;top:853px;width:10px;height:9px;background:#333;border:1px solid #444"></div>
<div style="left:76px;top:853px;width:10px;height:9px;background:#454545;border:1px solid #444"></div>
<div style="left:86px;top:853px;width:10px;height:9px;background:#666;border:1px solid #444"></div>
<div style="left:96px;top:853px;width:10px;height:9px;background:#7a7a7a;border:1px solid #444"></div>
<div style="left:106px;top:853px;width:10px;height:9px;background:#999;border:1px solid #444"></div>
<div style="left:115px;top:853px;width:10px;height:9px;background:#b8b8b8;border:1px solid #444"></div>
<div style="left:125px;top:853px;width:10px;height:9px;background:#cfcfcf;border:1px solid #444"></div>
<div style="left:135px;top:853px;width:10px;height:9px;background:#dedede;border:1px solid #444"></div>
<div style="left:144px;top:853px;width:10px;height:9px;background:#ebebeb;border:1px solid #444"></div>
<div style="left:154px;top:853px;width:10px;height:9px;background:#f5f5f5;border:1px solid #444"></div>
<div style="left:8px;top:862px;width:10px;height:9px;background:#f00;border:1px solid #444"></div>
<div style="left:18px;top:862px;width:10px;height:9px;background:#ff0;border:1px solid #444"></div>
<div style="left:28px;top:862px;width:10px;height:9px;background:#0f0;border:1px solid #444"></div>
<div style="left:37px;top:862px;width:10px;height:9px;background:#0ff;border:1px solid #444"></div>
<div style="left:47px;top:862px;width:10px;height:9px;background:#00f;border:1px solid #444"></div>
<div style="left:57px;top:862px;width:10px;height:9px;background:#f0f;border:1px solid #444"></div>
<div style="left:66px;top:862px;width:10px;height:9px;background:#2a2a2a;border:1px solid #444"></div>
<div style="left:76px;top:862px;width:10px;height:9px;background:#4a4e58;border:1px solid #444"></div>
<div style="left:86px;top:862px;width:10px;height:9px;background:#7b8aa8;border:1px solid #444"></div>
<div style="left:96px;top:862px;width:10px;height:9px;background:#a8b0cc;border:1px solid #444"></div>
<div style="left:106px;top:862px;width:10px;height:9px;background:#c8d0e8;border:1px solid #444"></div>
<div style="left:115px;top:862px;width:10px;height:9px;background:#333028;border:1px solid #444"></div>
<div style="left:125px;top:862px;width:10px;height:9px;background:#4d4034;border:1px solid #444"></div>
<div style="left:135px;top:862px;width:10px;height:9px;background:#6b5a49;border:1px solid #444"></div>
<div style="left:144px;top:862px;width:10px;height:9px;background:#b08c78;border:1px solid #444"></div>
<div style="left:154px;top:862px;width:10px;height:9px;background:#c4a08c;border:1px solid #444"></div>
<div style="left:8px;top:871px;width:10px;height:9px;background:#fa8a8a;border:1px solid #444"></div>
<div style="left:18px;top:871px;width:10px;height:9px;background:#fbb38a;border:1px solid #444"></div>
<div style="left:28px;top:871px;width:10px;height:9px;background:#fcd48e;border:1px solid #444"></div>
<div style="left:37px;top:871px;width:10px;height:9px;background:#fdf88e;border:1px solid #444"></div>
<div style="left:47px;top:871px;width:10px;height:9px;background:#c8f88e;border:1px solid #444"></div>
<div style="left:57px;top:871px;width:10px;height:9px;background:#8ef8a0;border:1px solid #444"></div>
<div style="left:66px;top:871px;width:10px;height:9px;background:#8ef8e0;border:1px solid #444"></div>
<div style="left:76px;top:871px;width:10px;height:9px;background:#8ee0fa;border:1px solid #444"></div>
<div style="left:86px;top:871px;width:10px;height:9px;background:#8ec0fa;border:1px solid #444"></div>
<div style="left:96px;top:871px;width:10px;height:9px;background:#9ea0fa;border:1px solid #444"></div>
<div style="left:106px;top:871px;width:10px;height:9px;background:#c0a0fa;border:1px solid #444"></div>
<div style="left:115px;top:871px;width:10px;height:9px;background:#e0a0fa;border:1px solid #444"></div>
<div style="left:125px;top:871px;width:10px;height:9px;background:#fa8ef0;border:1px solid #444"></div>
<div style="left:135px;top:871px;width:10px;height:9px;background:#fa8ec0;border:1px solid #444"></div>
<div style="left:144px;top:871px;width:10px;height:9px;background:#f8e0d8;border:1px solid #444"></div>
<div style="left:154px;top:871px;width:10px;height:9px;background:#fde4d4;border:1px solid #444"></div>
<div style="left:8px;top:880px;width:10px;height:9px;background:#ea5050;border:1px solid #444"></div>
<div style="left:18px;top:880px;width:10px;height:9px;background:#ea8050;border:1px solid #444"></div>
<div style="left:28px;top:880px;width:10px;height:9px;background:#e4b050;border:1px solid #444"></div>
<div style="left:37px;top:880px;width:10px;height:9px;background:#e4e050;border:1px solid #444"></div>
<div style="left:47px;top:880px;width:10px;height:9px;background:#a0e050;border:1px solid #444"></div>
<div style="left:57px;top:880px;width:10px;height:9px;background:#50e060;border:1px solid #444"></div>
<div style="left:66px;top:880px;width:10px;height:9px;background:#50e0c0;border:1px solid #444"></div>
<div style="left:76px;top:880px;width:10px;height:9px;background:#50b0e8;border:1px solid #444"></div>
<div style="left:86px;top:880px;width:10px;height:9px;background:#5090e8;border:1px solid #444"></div>
<div style="left:96px;top:880px;width:10px;height:9px;background:#6070e8;border:1px solid #444"></div>
<div style="left:106px;top:880px;width:10px;height:9px;background:#9050e8;border:1px solid #444"></div>
<div style="left:115px;top:880px;width:10px;height:9px;background:#c050e8;border:1px solid #444"></div>
<div style="left:125px;top:880px;width:10px;height:9px;background:#e850c8;border:1px solid #444"></div>
<div style="left:135px;top:880px;width:10px;height:9px;background:#e85088;border:1px solid #444"></div>
<div style="left:144px;top:880px;width:10px;height:9px;background:#f4dcd4;border:1px solid #444"></div>
<div style="left:154px;top:880px;width:10px;height:9px;background:#f8dcc8;border:1px solid #444"></div>
<div style="left:8px;top:889px;width:10px;height:9px;background:#f02030;border:1px solid #444"></div>
<div style="left:18px;top:889px;width:10px;height:9px;background:#ff5010;border:1px solid #444"></div>
<div style="left:28px;top:889px;width:10px;height:9px;background:#ffa000;border:1px solid #444"></div>
<div style="left:37px;top:889px;width:10px;height:9px;background:#ffe000;border:1px solid #444"></div>
<div style="left:47px;top:889px;width:10px;height:9px;background:#80f020;border:1px solid #444"></div>
<div style="left:57px;top:889px;width:10px;height:9px;background:#20e040;border:1px solid #444"></div>
<div style="left:66px;top:889px;width:10px;height:9px;background:#20f8c0;border:1px solid #444"></div>
<div style="left:76px;top:889px;width:10px;height:9px;background:#20a0ff;border:1px solid #444"></div>
<div style="left:86px;top:889px;width:10px;height:9px;background:#2060ff;border:1px solid #444"></div>
<div style="left:96px;top:889px;width:10px;height:9px;background:#0010ff;border:1px solid #444"></div>
<div style="left:106px;top:889px;width:10px;height:9px;background:#6010ff;border:1px solid #444"></div>
<div style="left:115px;top:889px;width:10px;height:9px;background:#a010ff;border:1px solid #444"></div>
<div style="left:125px;top:889px;width:10px;height:9px;background:#e01090;border:1px solid #444"></div>
<div style="left:135px;top:889px;width:10px;height:9px;background:#ff0060;border:1px solid #444"></div>
<div style="left:144px;top:889px;width:10px;height:9px;background:#f0d0c0;border:1px solid #444"></div>
<div style="left:154px;top:889px;width:10px;height:9px;background:#f4c8a8;border:1px solid #444"></div>
<div style="left:8px;top:898px;width:10px;height:9px;background:#b03030;border:1px solid #444"></div>
<div style="left:18px;top:898px;width:10px;height:9px;background:#a05828;border:1px solid #444"></div>
<div style="left:28px;top:898px;width:10px;height:9px;background:#a08828;border:1px solid #444"></div>
<div style="left:37px;top:898px;width:10px;height:9px;background:#a0a028;border:1px solid #444"></div>
<div style="left:47px;top:898px;width:10px;height:9px;background:#60a028;border:1px solid #444"></div>
<div style="left:57px;top:898px;width:10px;height:9px;background:#28a040;border:1px solid #444"></div>
<div style="left:66px;top:898px;width:10px;height:9px;background:#289080;border:1px solid #444"></div>
<div style="left:76px;top:898px;width:10px;height:9px;background:#2878a0;border:1px solid #444"></div>
<div style="left:86px;top:898px;width:10px;height:9px;background:#2858a8;border:1px solid #444"></div>
<div style="left:96px;top:898px;width:10px;height:9px;background:#3030a8;border:1px solid #444"></div>
<div style="left:106px;top:898px;width:10px;height:9px;background:#5828a8;border:1px solid #444"></div>
<div style="left:115px;top:898px;width:10px;height:9px;background:#8828a8;border:1px solid #444"></div>
<div style="left:125px;top:898px;width:10px;height:9px;background:#a82888;border:1px solid #444"></div>
<div style="left:135px;top:898px;width:10px;height:9px;background:#a82850;border:1px solid #444"></div>
<div style="left:144px;top:898px;width:10px;height:9px;background:#fcdcc8;border:1px solid #444"></div>
<div style="left:154px;top:898px;width:10px;height:9px;background:#e4b490;border:1px solid #444"></div>
<div style="left:8px;top:907px;width:10px;height:9px;background:#600808;border:1px solid #444"></div>
<div style="left:18px;top:907px;width:10px;height:9px;background:#502808;border:1px solid #444"></div>
<div style="left:28px;top:907px;width:10px;height:9px;background:#504008;border:1px solid #444"></div>
<div style="left:37px;top:907px;width:10px;height:9px;background:#505008;border:1px solid #444"></div>
<div style="left:47px;top:907px;width:10px;height:9px;background:#306008;border:1px solid #444"></div>
<div style="left:57px;top:907px;width:10px;height:9px;background:#086008;border:1px solid #444"></div>
<div style="left:66px;top:907px;width:10px;height:9px;background:#085840;border:1px solid #444"></div>
<div style="left:76px;top:907px;width:10px;height:9px;background:#083858;border:1px solid #444"></div>
<div style="left:86px;top:907px;width:10px;height:9px;background:#082060;border:1px solid #444"></div>
<div style="left:96px;top:907px;width:10px;height:9px;background:#080868;border:1px solid #444"></div>
<div style="left:106px;top:907px;width:10px;height:9px;background:#280868;border:1px solid #444"></div>
<div style="left:115px;top:907px;width:10px;height:9px;background:#480868;border:1px solid #444"></div>
<div style="left:125px;top:907px;width:10px;height:9px;background:#580848;border:1px solid #444"></div>
<div style="left:135px;top:907px;width:10px;height:9px;background:#580820;border:1px solid #444"></div>
<div style="left:144px;top:907px;width:10px;height:9px;background:#f8c8a8;border:1px solid #444"></div>
<div style="left:154px;top:907px;width:10px;height:9px;background:#d49474;border:1px solid #444"></div>
<div style="left:8px;top:916px;width:10px;height:9px;background:#300404;border:1px solid #444"></div>
<div style="left:18px;top:916px;width:10px;height:9px;background:#281804;border:1px solid #444"></div>
<div style="left:28px;top:916px;width:10px;height:9px;background:#302404;border:1px solid #444"></div>
<div style="left:37px;top:916px;width:10px;height:9px;background:#283004;border:1px solid #444"></div>
<div style="left:47px;top:916px;width:10px;height:9px;background:#183004;border:1px solid #444"></div>
<div style="left:57px;top:916px;width:10px;height:9px;background:#043004;border:1px solid #444"></div>
<div style="left:66px;top:916px;width:10px;height:9px;background:#043024;border:1px solid #444"></div>
<div style="left:76px;top:916px;width:10px;height:9px;background:#042030;border:1px solid #444"></div>
<div style="left:86px;top:916px;width:10px;height:9px;background:#041838;border:1px solid #444"></div>
<div style="left:96px;top:916px;width:10px;height:9px;background:#040438;border:1px solid #444"></div>
<div style="left:106px;top:916px;width:10px;height:9px;background:#140438;border:1px solid #444"></div>
<div style="left:115px;top:916px;width:10px;height:9px;background:#240438;border:1px solid #444"></div>
<div style="left:125px;top:916px;width:10px;height:9px;background:#300428;border:1px solid #444"></div>
<div style="left:135px;top:916px;width:10px;height:9px;background:#300414;border:1px solid #444"></div>
<div style="left:144px;top:916px;width:10px;height:9px;background:#f0b890;border:1px solid #444"></div>
<div style="left:154px;top:916px;width:10px;height:9px;background:#b08060;border:1px solid #444"></div>
<div style="left:8px;top:969px;width:9px;height:8px;background:#101040;border:1px solid #556"></div>
<div class="t" style="left:9.5px;top:969.5px;font-size:7.5px;color:#fff;font-weight:bold">H</div>
<div style="left:40px;top:969px;width:9px;height:8px;background:#101040;border:1px solid #556"></div>
<div class="t" style="left:41.5px;top:969.5px;font-size:7.5px;color:#fff;font-weight:bold">S</div>
<div style="left:71px;top:969px;width:9px;height:8px;background:#101040;border:1px solid #556"></div>
<div class="t" style="left:72.5px;top:969.5px;font-size:7.5px;color:#fff;font-weight:bold">V</div>
<svg style="left:123px;top:964px;" width="13" height="15" viewBox="0 0 13 15"><rect x="3" y="6" width="9" height="8" fill="#ddd" stroke="#aaa"/><path d="M1 1L5 6" stroke="#aaa"/></svg>
<svg style="left:140px;top:963px;" width="16" height="16" viewBox="0 0 16 16"><path d="M6 1 Q1 7 3 10 Q6 13 9 10 Q11 7 6 1Z" fill="#444"/><path d="M11 9V16M7.5 12.5H14.5" stroke="#222" stroke-width="2"/></svg>
<svg style="left:160px;top:963px;" width="15" height="16" viewBox="0 0 15 16"><ellipse cx="7.5" cy="4" rx="6" ry="3" fill="#ddd" stroke="#aaa"/><path d="M2 5 L3.5 15 H11.5 L13 5" fill="#e4e4e4" stroke="#aaa"/></svg>
<div style="left:186px;top:46px;width:848px;height:25px;background:linear-gradient(#dcdfe2,#d3d6d9);border-bottom:1px solid #a9abad"></div>
<div style="left:187px;top:49px;width:41px;height:21px;background:linear-gradient(#f4f4f4,#dcdcdc);border:1px solid #b4b4b4;border-radius:3px"></div>
<svg style="left:196px;top:49px;" width="24" height="19" viewBox="0 0 24 19"><path d="M11 3.5 C5 3.5 2.5 7 3 10.5 C3.5 14.5 8.5 16 13 15.5 C17.5 15 20 12.5 19.5 9.5 C19 6.5 15.5 5.5 12.5 6 C9 6.5 7.5 9 8.5 10.8 C9.5 12.5 13 12.5 14.5 10.5" stroke="#6e6e6e" stroke-width="2.6" fill="none" stroke-linecap="round"/></svg>
<div style="left:236px;top:53px;width:14px;height:14px;background:repeating-conic-gradient(#111 0 25%,#fff 0 50%) 0 0/5.6px 5.6px"></div>
<svg style="left:233px;top:50px;" width="7" height="7" viewBox="0 0 7 7"><path d="M3.5 0V7M0 3.5H7M1 1L6 6M6 1L1 6" stroke="#222" stroke-width="1.1"/></svg>
<div style="left:258px;top:50px;width:1px;height:19px;background:#b5b7ba;border-right:1px solid #eef0f2"></div>
<div style="left:314px;top:50px;width:1px;height:19px;background:#b5b7ba;border-right:1px solid #eef0f2"></div>
<div style="left:418px;top:50px;width:1px;height:19px;background:#b5b7ba;border-right:1px solid #eef0f2"></div>
<div style="left:498px;top:50px;width:1px;height:19px;background:#b5b7ba;border-right:1px solid #eef0f2"></div>
<div style="left:601px;top:50px;width:1px;height:19px;background:#b5b7ba;border-right:1px solid #eef0f2"></div>
<div style="left:646px;top:50px;width:1px;height:19px;background:#b5b7ba;border-right:1px solid #eef0f2"></div>
<svg style="left:264px;top:51px;" width="20" height="17" viewBox="0 0 20 17"><path d="M6 11.5 H13 A4.3 4.3 0 0 0 13 3 H6" stroke="#4a4a4a" stroke-width="2.8" fill="none" stroke-dasharray="20 1 1.5 1 1.5 1 1.5"/><path d="M1 11.5 L7 6.5 V16.5Z" fill="#4a4a4a"/></svg>
<svg style="left:288px;top:51px;" width="20" height="17" viewBox="0 -3 20 17"><path d="M14 3 H7 A4.3 4.3 0 0 0 7 11.5 H14" stroke="#c2c4c6" stroke-width="2.8" fill="none" stroke-dasharray="10 1 1.5 1 1.5 1 1.5 1 30"/><path d="M19 3 L13 -2 V8Z" fill="#c2c4c6"/></svg>
<svg style="left:316px;top:46px;" width="30" height="26" viewBox="0 0 30 26"><g fill="#4d4d4d"><ellipse cx="14" cy="5.5" rx="2.2" ry="2.4"/><ellipse cx="8" cy="9.5" rx="2.3" ry="2.1"/><ellipse cx="20" cy="9.5" rx="2.3" ry="2.1"/><ellipse cx="8" cy="16" rx="2.3" ry="2.1"/><ellipse cx="20" cy="16" rx="2.3" ry="2.1"/><ellipse cx="14" cy="19.5" rx="2.2" ry="2.4"/></g></svg>
<svg style="left:345px;top:51px;" width="18" height="18" viewBox="0 0 18 18"><rect x="3" y="3" width="12" height="12" fill="none" stroke="#c0c0c0" stroke-dasharray="2 1.5" stroke-width="1.3"/><rect x="1" y="1" width="4" height="4" fill="#d0d0d0"/><rect x="13" y="1" width="4" height="4" fill="#d0d0d0"/><rect x="1" y="13" width="4" height="4" fill="#d0d0d0"/><rect x="13" y="13" width="4" height="4" fill="#d0d0d0"/></svg>
<svg style="left:368px;top:50px;" width="22" height="20" viewBox="0 0 22 20"><path d="M9 9 L15 5 L21 13 L13 19Z" fill="#fff" stroke="#333" stroke-width="1.2"/><path d="M1.5 16 Q3 10 9 9 L11 11 Q5 12 3 17Z" fill="#222"/><path d="M11 9 L16 1.5 L18.5 3 L13.5 10.5Z" fill="#eee" stroke="#333" stroke-width="1.1"/></svg>
<svg style="left:392px;top:50px;" width="19" height="19" viewBox="0 0 19 19"><path d="M3.5 3.5 Q9.5 8 15.5 3.5 Q11 9.5 15.5 15.5 Q9.5 11 3.5 15.5 Q8 9.5 3.5 3.5Z" fill="none" stroke="#555" stroke-width="2.4"/><path d="M0.5 0.5 H7 L0.5 7Z M18.5 0.5 H12 L18.5 7Z M0.5 18.5 H7 L0.5 12Z M18.5 18.5 H12 L18.5 12Z" fill="#555"/></svg>
<svg style="left:425px;top:53px;" width="18" height="14" viewBox="0 0 18 14"><rect x="0.5" y="1" width="17" height="12" fill="#444"/><rect x="1.5" y="4" width="15" height="5" fill="#fff"/><path d="M1.5 2.5H16.5M1.5 10.5H16.5" stroke="#fff" stroke-width="1" stroke-dasharray="1.2 1.3"/><rect x="0.5" y="11" width="17" height="2" fill="#666"/></svg>
<svg style="left:450px;top:52px;" width="17" height="17" viewBox="0 0 17 17"><rect x="1.5" y="1.5" width="14" height="14" fill="none" stroke="#b5b5b5" stroke-width="1.3" stroke-dasharray="2 1.4"/><rect x="4" y="4" width="9" height="9" fill="none" stroke="#c8c8c8"/></svg>
<svg style="left:473px;top:50px;" width="19" height="20" viewBox="0 0 19 20"><path d="M1.5 16.5 L6 4 L8.5 8.5 L14.5 1.5 L18 5 L11 10.5 L15.5 13Z" fill="#505050"/><path d="M2 16.5 L15.5 13 L17 15 Z" fill="#bbb"/></svg>
<svg style="left:504px;top:49px;" width="20" height="20" viewBox="0 0 20 20"><path d="M1.5 11 V16.8 H13" stroke="#3aa6ea" stroke-width="1.6" fill="none"/><path d="M1.5 4.5 L13 16" stroke="#1e2a33" stroke-width="1.8"/><path d="M13 16.8 H14" stroke="#1e2a33" stroke-width="1.6"/><rect x="12.8" y="0.5" width="3.4" height="16" fill="#fff" stroke="#1e2a33" stroke-width="1.1"/></svg>
<svg style="left:528px;top:49px;" width="21" height="20" viewBox="0 0 21 20"><path d="M1.5 16.5 Q2.5 7.5 11 7.5 Q18 7.5 18.5 16.5" stroke="#3aa6ea" stroke-width="1.6" fill="none"/><path d="M1.5 16.5 Q2.5 7.5 11 7.5" stroke="#1e2a33" stroke-width="1.6" fill="none"/><path d="M1.5 16.8 H16" stroke="#1e2a33" stroke-width="1.6"/><rect x="12.8" y="1.5" width="3.4" height="15" fill="#fff" stroke="#1e2a33" stroke-width="1.1"/></svg>
<svg style="left:553px;top:51px;" width="17" height="18" viewBox="0 0 17 18"><path d="M2 3 L8 5 V17 L2 15Z M8 5 L14 3 V15 L8 17Z" fill="#e4e4e4" stroke="#c0c0c0"/></svg>
<svg style="left:577px;top:49px;" width="19" height="21" viewBox="0 0 19 21"><path d="M6 3V20M13 3V20M1.5 8H17.5M1.5 15H17.5" stroke="#2a9ae8" stroke-width="1.8"/><rect x="7.8" y="1" width="3.6" height="16.5" rx="1.5" fill="#fff" stroke="#222" stroke-width="1.1"/></svg>
<svg style="left:608px;top:49px;" width="34" height="20" viewBox="0 0 34 20"><defs><linearGradient id="fg" x1="0" y1="0" x2="0" y2="1"><stop offset="0" stop-color="#333"/><stop offset="1" stop-color="#777"/></linearGradient></defs><rect x="1.5" y="8" width="17" height="11" fill="url(#fg)" stroke="#333"/><rect x="3" y="9.5" width="14" height="2" fill="#ddd"/><path d="M1.5 3.5V1.5H4.5M15.5 1.5H18.5V3.5M8 4 L10 2 L12 4" stroke="#333" stroke-width="1.1" fill="none"/><path d="M24 9H33L28.5 14Z" fill="#333"/></svg>
<div style="left:652px;top:49px;width:79px;height:19px;background:linear-gradient(#f0f1f2,#dcdee0);border:1px solid #b4b6b8;border-radius:3px"></div>
<div class="t" style="transform:scaleX(0.8232);left:656px;top:53px;--w:72;font-size:11px;color:#4a4a4a;letter-spacing:-0.3px">CLIPホームページ</div>
<div style="left:186px;top:71px;width:848px;height:22px;background:linear-gradient(#d6d6d6,#c6c6c6)"></div>
<div style="left:186px;top:92px;width:848px;height:2px;background:#a5a7a9"></div>
<div style="left:187px;top:74px;width:97px;height:19px;background:linear-gradient(#e6e8eb,#d2d5d9);border:1px solid #b0b2b5;border-bottom:none;border-radius:2px 2px 0 0"></div>
<div class="t" style="transform:scaleX(0.7874);left:190px;top:77px;--w:64;font-size:11px;color:#333">新規キャンバス*</div>
<div style="left:271px;top:80px;width:6px;height:6px;border-radius:50%;background:#666"></div>
<div style="left:1021px;top:73px;width:12px;height:19px;background:linear-gradient(#eceef0,#d4d6d8);border:1px solid #b8babc;border-radius:2px"></div>
<svg style="left:1023px;top:81px;" width="8" height="4" viewBox="0 0 8 4"><path d="M0 0H8L4 4Z" fill="#333"/></svg>
<div style="left:186px;top:94px;width:835px;height:15px;background:#fff"></div>
<div style="left:186px;top:108px;width:835px;height:1px;background:#555"></div>
<div style="left:186px;top:94px;width:14px;height:757px;background:#fff"></div>
<div style="left:199px;top:94px;width:1px;height:757px;background:#555"></div>
<svg style="left:0px;top:94px;" width="1021" height="15" viewBox="0 0 1021 15"><path d="M202.5 11.5V14" stroke="#4a4a4a"/><path d="M210.5 11.5V14" stroke="#4a4a4a"/><path d="M217.5 11.5V14" stroke="#4a4a4a"/><path d="M225.5 10V14" stroke="#4a4a4a"/><path d="M232.5 11.5V14" stroke="#4a4a4a"/><path d="M240.5 11.5V14" stroke="#4a4a4a"/><path d="M247.5 11.5V14" stroke="#4a4a4a"/><path d="M254.5 11.5V14" stroke="#4a4a4a"/><path d="M262.5 0V14" stroke="#4a4a4a"/><path d="M269.5 11.5V14" stroke="#4a4a4a"/><path d="M276.5 11.5V14" stroke="#4a4a4a"/><path d="M284.5 11.5V14" stroke="#4a4a4a"/><path d="M291.5 11.5V14" stroke="#4a4a4a"/><path d="M299.5 10V14" stroke="#4a4a4a"/><path d="M306.5 11.5V14" stroke="#4a4a4a"/><path d="M314.5 11.5V14" stroke="#4a4a4a"/><path d="M321.5 11.5V14" stroke="#4a4a4a"/><path d="M328.5 11.5V14" stroke="#4a4a4a"/><path d="M336.5 0V14" stroke="#4a4a4a"/><path d="M343.5 11.5V14" stroke="#4a4a4a"/><path d="M350.5 11.5V14" stroke="#4a4a4a"/><path d="M358.5 11.5V14" stroke="#4a4a4a"/><path d="M365.5 11.5V14" stroke="#4a4a4a"/><path d="M373.5 10V14" stroke="#4a4a4a"/><path d="M380.5 11.5V14" stroke="#4a4a4a"/><path d="M388.5 11.5V14" stroke="#4a4a4a"/><path d="M395.5 11.5V14" stroke="#4a4a4a"/><path d="M402.5 11.5V14" stroke="#4a4a4a"/><path d="M410.5 0V14" stroke="#4a4a4a"/><path d="M417.5 11.5V14" stroke="#4a4a4a"/><path d="M424.5 11.5V14" stroke="#4a4a4a"/><path d="M432.5 11.5V14" stroke="#4a4a4a"/><path d="M439.5 11.5V14" stroke="#4a4a4a"/><path d="M447.5 10V14" stroke="#4a4a4a"/><path d="M454.5 11.5V14" stroke="#4a4a4a"/><path d="M462.5 11.5V14" stroke="#4a4a4a"/><path d="M469.5 11.5V14" stroke="#4a4a4a"/><path d="M476.5 11.5V14" stroke="#4a4a4a"/><path d="M484.5 0V14" stroke="#4a4a4a"/><path d="M491.5 11.5V14" stroke="#4a4a4a"/><path d="M498.5 11.5V14" stroke="#4a4a4a"/><path d="M506.5 11.5V14" stroke="#4a4a4a"/><path d="M513.5 11.5V14" stroke="#4a4a4a"/><path d="M521.5 10V14" stroke="#4a4a4a"/><path d="M528.5 11.5V14" stroke="#4a4a4a"/><path d="M536.5 11.5V14" stroke="#4a4a4a"/><path d="M543.5 11.5V14" stroke="#4a4a4a"/><path d="M550.5 11.5V14" stroke="#4a4a4a"/><path d="M558.5 0V14" stroke="#4a4a4a"/><path d="M565.5 11.5V14" stroke="#4a4a4a"/><path d="M572.5 11.5V14" stroke="#4a4a4a"/><path d="M580.5 11.5V14" stroke="#4a4a4a"/><path d="M587.5 11.5V14" stroke="#4a4a4a"/><path d="M595.5 10V14" stroke="#4a4a4a"/><path d="M602.5 11.5V14" stroke="#4a4a4a"/><path d="M610.5 11.5V14" stroke="#4a4a4a"/><path d="M617.5 11.5V14" stroke="#4a4a4a"/><path d="M624.5 11.5V14" stroke="#4a4a4a"/><path d="M632.5 0V14" stroke="#4a4a4a"/><path d="M639.5 11.5V14" stroke="#4a4a4a"/><path d="M646.5 11.5V14" stroke="#4a4a4a"/><path d="M654.5 11.5V14" stroke="#4a4a4a"/><path d="M661.5 11.5V14" stroke="#4a4a4a"/><path d="M669.5 10V14" stroke="#4a4a4a"/><path d="M676.5 11.5V14" stroke="#4a4a4a"/><path d="M684.5 11.5V14" stroke="#4a4a4a"/><path d="M691.5 11.5V14" stroke="#4a4a4a"/><path d="M698.5 11.5V14" stroke="#4a4a4a"/><path d="M706.5 0V14" stroke="#4a4a4a"/><path d="M713.5 11.5V14" stroke="#4a4a4a"/><path d="M720.5 11.5V14" stroke="#4a4a4a"/><path d="M728.5 11.5V14" stroke="#4a4a4a"/><path d="M735.5 11.5V14" stroke="#4a4a4a"/><path d="M743.5 10V14" stroke="#4a4a4a"/><path d="M750.5 11.5V14" stroke="#4a4a4a"/><path d="M758.5 11.5V14" stroke="#4a4a4a"/><path d="M765.5 11.5V14" stroke="#4a4a4a"/><path d="M772.5 11.5V14" stroke="#4a4a4a"/><path d="M780.5 0V14" stroke="#4a4a4a"/><path d="M787.5 11.5V14" stroke="#4a4a4a"/><path d="M794.5 11.5V14" stroke="#4a4a4a"/><path d="M802.5 11.5V14" stroke="#4a4a4a"/><path d="M809.5 11.5V14" stroke="#4a4a4a"/><path d="M817.5 10V14" stroke="#4a4a4a"/><path d="M824.5 11.5V14" stroke="#4a4a4a"/><path d="M832.5 11.5V14" stroke="#4a4a4a"/><path d="M839.5 11.5V14" stroke="#4a4a4a"/><path d="M846.5 11.5V14" stroke="#4a4a4a"/><path d="M854.5 0V14" stroke="#4a4a4a"/><path d="M861.5 11.5V14" stroke="#4a4a4a"/><path d="M868.5 11.5V14" stroke="#4a4a4a"/><path d="M876.5 11.5V14" stroke="#4a4a4a"/><path d="M883.5 11.5V14" stroke="#4a4a4a"/><path d="M891.5 10V14" stroke="#4a4a4a"/><path d="M898.5 11.5V14" stroke="#4a4a4a"/><path d="M906.5 11.5V14" stroke="#4a4a4a"/><path d="M913.5 11.5V14" stroke="#4a4a4a"/><path d="M920.5 11.5V14" stroke="#4a4a4a"/><path d="M928.5 0V14" stroke="#4a4a4a"/><path d="M935.5 11.5V14" stroke="#4a4a4a"/><path d="M942.5 11.5V14" stroke="#4a4a4a"/><path d="M950.5 11.5V14" stroke="#4a4a4a"/><path d="M957.5 11.5V14" stroke="#4a4a4a"/><path d="M965.5 10V14" stroke="#4a4a4a"/><path d="M972.5 11.5V14" stroke="#4a4a4a"/><path d="M980.5 11.5V14" stroke="#4a4a4a"/><path d="M987.5 11.5V14" stroke="#4a4a4a"/><path d="M994.5 11.5V14" stroke="#4a4a4a"/><path d="M1002.5 0V14" stroke="#4a4a4a"/><path d="M1009.5 11.5V14" stroke="#4a4a4a"/><path d="M1016.5 11.5V14" stroke="#4a4a4a"/></svg>
<div style="left:186px;top:94px;width:834px;height:14px;overflow:hidden"><div class="t" style="transform:scaleX(0.7739);left:79px;top:2px;--w:13.7;font-family:'Liberation Serif',serif;font-size:14.5px;color:#3a3a3a;letter-spacing:1.6px">40</div><div class="t" style="transform:scaleX(0.6885);left:153px;top:2px;--w:6.1;font-family:'Liberation Serif',serif;font-size:14.5px;color:#3a3a3a;letter-spacing:1.6px">0</div><div class="t" style="transform:scaleX(0.7739);left:227px;top:2px;--w:13.7;font-family:'Liberation Serif',serif;font-size:14.5px;color:#3a3a3a;letter-spacing:1.6px">40</div><div class="t" style="transform:scaleX(0.7739);left:301px;top:2px;--w:13.7;font-family:'Liberation Serif',serif;font-size:14.5px;color:#3a3a3a;letter-spacing:1.6px">80</div><div class="t" style="transform:scaleX(0.8019);left:375px;top:2px;--w:21.299999999999997;font-family:'Liberation Serif',serif;font-size:14.5px;color:#3a3a3a;letter-spacing:1.6px">120</div><div class="t" style="transform:scaleX(0.8019);left:449px;top:2px;--w:21.299999999999997;font-family:'Liberation Serif',serif;font-size:14.5px;color:#3a3a3a;letter-spacing:1.6px">160</div><div class="t" style="transform:scaleX(0.8019);left:523px;top:2px;--w:21.299999999999997;font-family:'Liberation Serif',serif;font-size:14.5px;color:#3a3a3a;letter-spacing:1.6px">200</div><div class="t" style="transform:scaleX(0.8019);left:597px;top:2px;--w:21.299999999999997;font-family:'Liberation Serif',serif;font-size:14.5px;color:#3a3a3a;letter-spacing:1.6px">240</div><div class="t" style="transform:scaleX(0.8019);left:671px;top:2px;--w:21.299999999999997;font-family:'Liberation Serif',serif;font-size:14.5px;color:#3a3a3a;letter-spacing:1.6px">280</div><div class="t" style="transform:scaleX(0.8019);left:745px;top:2px;--w:21.299999999999997;font-family:'Liberation Serif',serif;font-size:14.5px;color:#3a3a3a;letter-spacing:1.6px">320</div><div class="t" style="transform:scaleX(0.8019);left:819px;top:2px;--w:21.299999999999997;font-family:'Liberation Serif',serif;font-size:14.5px;color:#3a3a3a;letter-spacing:1.6px">360</div></div>
<div style="left:1020px;top:94px;width:1px;height:15px;background:#555"></div>
<svg style="left:186px;top:0px;" width="14" height="851" viewBox="0 0 14 851"><path d="M11 114.5H14" stroke="#4a4a4a"/><path d="M11 121.5H14" stroke="#4a4a4a"/><path d="M9.5 128.5H14" stroke="#4a4a4a"/><path d="M11 136.5H14" stroke="#4a4a4a"/><path d="M11 143.5H14" stroke="#4a4a4a"/><path d="M11 151.5H14" stroke="#4a4a4a"/><path d="M11 158.5H14" stroke="#4a4a4a"/><path d="M0 165.5H14" stroke="#4a4a4a"/><path d="M11 173.5H14" stroke="#4a4a4a"/><path d="M11 180.5H14" stroke="#4a4a4a"/><path d="M11 188.5H14" stroke="#4a4a4a"/><path d="M11 195.5H14" stroke="#4a4a4a"/><path d="M9.5 202.5H14" stroke="#4a4a4a"/><path d="M11 210.5H14" stroke="#4a4a4a"/><path d="M11 217.5H14" stroke="#4a4a4a"/><path d="M11 225.5H14" stroke="#4a4a4a"/><path d="M11 232.5H14" stroke="#4a4a4a"/><path d="M0 239.5H14" stroke="#4a4a4a"/><path d="M11 247.5H14" stroke="#4a4a4a"/><path d="M11 254.5H14" stroke="#4a4a4a"/><path d="M11 262.5H14" stroke="#4a4a4a"/><path d="M11 269.5H14" stroke="#4a4a4a"/><path d="M9.5 276.5H14" stroke="#4a4a4a"/><path d="M11 284.5H14" stroke="#4a4a4a"/><path d="M11 291.5H14" stroke="#4a4a4a"/><path d="M11 299.5H14" stroke="#4a4a4a"/><path d="M11 306.5H14" stroke="#4a4a4a"/><path d="M0 313.5H14" stroke="#4a4a4a"/><path d="M11 321.5H14" stroke="#4a4a4a"/><path d="M11 328.5H14" stroke="#4a4a4a"/><path d="M11 336.5H14" stroke="#4a4a4a"/><path d="M11 343.5H14" stroke="#4a4a4a"/><path d="M9.5 350.5H14" stroke="#4a4a4a"/><path d="M11 358.5H14" stroke="#4a4a4a"/><path d="M11 365.5H14" stroke="#4a4a4a"/><path d="M11 373.5H14" stroke="#4a4a4a"/><path d="M11 380.5H14" stroke="#4a4a4a"/><path d="M0 387.5H14" stroke="#4a4a4a"/><path d="M11 395.5H14" stroke="#4a4a4a"/><path d="M11 402.5H14" stroke="#4a4a4a"/><path d="M11 410.5H14" stroke="#4a4a4a"/><path d="M11 417.5H14" stroke="#4a4a4a"/><path d="M9.5 424.5H14" stroke="#4a4a4a"/><path d="M11 432.5H14" stroke="#4a4a4a"/><path d="M11 439.5H14" stroke="#4a4a4a"/><path d="M11 447.5H14" stroke="#4a4a4a"/><path d="M11 454.5H14" stroke="#4a4a4a"/><path d="M0 461.5H14" stroke="#4a4a4a"/><path d="M11 469.5H14" stroke="#4a4a4a"/><path d="M11 476.5H14" stroke="#4a4a4a"/><path d="M11 484.5H14" stroke="#4a4a4a"/><path d="M11 491.5H14" stroke="#4a4a4a"/><path d="M9.5 498.5H14" stroke="#4a4a4a"/><path d="M11 506.5H14" stroke="#4a4a4a"/><path d="M11 513.5H14" stroke="#4a4a4a"/><path d="M11 521.5H14" stroke="#4a4a4a"/><path d="M11 528.5H14" stroke="#4a4a4a"/><path d="M0 535.5H14" stroke="#4a4a4a"/><path d="M11 543.5H14" stroke="#4a4a4a"/><path d="M11 550.5H14" stroke="#4a4a4a"/><path d="M11 558.5H14" stroke="#4a4a4a"/><path d="M11 565.5H14" stroke="#4a4a4a"/><path d="M9.5 572.5H14" stroke="#4a4a4a"/><path d="M11 580.5H14" stroke="#4a4a4a"/><path d="M11 587.5H14" stroke="#4a4a4a"/><path d="M11 595.5H14" stroke="#4a4a4a"/><path d="M11 602.5H14" stroke="#4a4a4a"/><path d="M0 609.5H14" stroke="#4a4a4a"/><path d="M11 617.5H14" stroke="#4a4a4a"/><path d="M11 624.5H14" stroke="#4a4a4a"/><path d="M11 632.5H14" stroke="#4a4a4a"/><path d="M11 639.5H14" stroke="#4a4a4a"/><path d="M9.5 646.5H14" stroke="#4a4a4a"/><path d="M11 654.5H14" stroke="#4a4a4a"/><path d="M11 661.5H14" stroke="#4a4a4a"/><path d="M11 669.5H14" stroke="#4a4a4a"/><path d="M11 676.5H14" stroke="#4a4a4a"/><path d="M0 683.5H14" stroke="#4a4a4a"/><path d="M11 691.5H14" stroke="#4a4a4a"/><path d="M11 698.5H14" stroke="#4a4a4a"/><path d="M11 706.5H14" stroke="#4a4a4a"/><path d="M11 713.5H14" stroke="#4a4a4a"/><path d="M9.5 720.5H14" stroke="#4a4a4a"/><path d="M11 728.5H14" stroke="#4a4a4a"/><path d="M11 735.5H14" stroke="#4a4a4a"/><path d="M11 743.5H14" stroke="#4a4a4a"/><path d="M11 750.5H14" stroke="#4a4a4a"/><path d="M0 757.5H14" stroke="#4a4a4a"/><path d="M11 765.5H14" stroke="#4a4a4a"/><path d="M11 772.5H14" stroke="#4a4a4a"/><path d="M11 780.5H14" stroke="#4a4a4a"/><path d="M11 787.5H14" stroke="#4a4a4a"/><path d="M9.5 794.5H14" stroke="#4a4a4a"/><path d="M11 802.5H14" stroke="#4a4a4a"/><path d="M11 809.5H14" stroke="#4a4a4a"/><path d="M11 817.5H14" stroke="#4a4a4a"/><path d="M11 824.5H14" stroke="#4a4a4a"/><path d="M0 831.5H14" stroke="#4a4a4a"/><path d="M11 839.5H14" stroke="#4a4a4a"/><path d="M11 846.5H14" stroke="#4a4a4a"/></svg>
<div style="left:186px;top:109px;width:13px;height:740px;overflow:hidden"><div style="left:1px;top:58px;width:30px;height:14px;transform:rotate(-90deg) translate(-100%,0);transform-origin:0 0"><div class="t tv" style="transform:scaleX(0.7611);left:16.3px;top:0px;--w:13.7;font-family:'Liberation Serif',serif;font-size:14.5px;color:#3a3a3a;letter-spacing:1.6px">40</div></div><div style="left:1px;top:132px;width:30px;height:14px;transform:rotate(-90deg) translate(-100%,0);transform-origin:0 0"><div class="t tv" style="transform:scaleX(0.7611);left:16.3px;top:0px;--w:13.7;font-family:'Liberation Serif',serif;font-size:14.5px;color:#3a3a3a;letter-spacing:1.6px">80</div></div><div style="left:1px;top:206px;width:30px;height:14px;transform:rotate(-90deg) translate(-100%,0);transform-origin:0 0"><div class="t tv" style="transform:scaleX(0.7889);left:8.700000000000003px;top:0px;--w:21.299999999999997;font-family:'Liberation Serif',serif;font-size:14.5px;color:#3a3a3a;letter-spacing:1.6px">120</div></div><div style="left:1px;top:280px;width:30px;height:14px;transform:rotate(-90deg) translate(-100%,0);transform-origin:0 0"><div class="t tv" style="transform:scaleX(0.7889);left:8.700000000000003px;top:0px;--w:21.299999999999997;font-family:'Liberation Serif',serif;font-size:14.5px;color:#3a3a3a;letter-spacing:1.6px">160</div></div><div style="left:1px;top:354px;width:30px;height:14px;transform:rotate(-90deg) translate(-100%,0);transform-origin:0 0"><div class="t tv" style="transform:scaleX(0.7889);left:8.700000000000003px;top:0px;--w:21.299999999999997;font-family:'Liberation Serif',serif;font-size:14.5px;color:#3a3a3a;letter-spacing:1.6px">200</div></div><div style="left:1px;top:428px;width:30px;height:14px;transform:rotate(-90deg) translate(-100%,0);transform-origin:0 0"><div class="t tv" style="transform:scaleX(0.7889);left:8.700000000000003px;top:0px;--w:21.299999999999997;font-family:'Liberation Serif',serif;font-size:14.5px;color:#3a3a3a;letter-spacing:1.6px">240</div></div><div style="left:1px;top:502px;width:30px;height:14px;transform:rotate(-90deg) translate(-100%,0);transform-origin:0 0"><div class="t tv" style="transform:scaleX(0.7889);left:8.700000000000003px;top:0px;--w:21.299999999999997;font-family:'Liberation Serif',serif;font-size:14.5px;color:#3a3a3a;letter-spacing:1.6px">280</div></div><div style="left:1px;top:576px;width:30px;height:14px;transform:rotate(-90deg) translate(-100%,0);transform-origin:0 0"><div class="t tv" style="transform:scaleX(0.7889);left:8.700000000000003px;top:0px;--w:21.299999999999997;font-family:'Liberation Serif',serif;font-size:14.5px;color:#3a3a3a;letter-spacing:1.6px">320</div></div><div style="left:1px;top:650px;width:30px;height:14px;transform:rotate(-90deg) translate(-100%,0);transform-origin:0 0"><div class="t tv" style="transform:scaleX(0.7889);left:8.700000000000003px;top:0px;--w:21.299999999999997;font-family:'Liberation Serif',serif;font-size:14.5px;color:#3a3a3a;letter-spacing:1.6px">360</div></div><div style="left:1px;top:724px;width:30px;height:14px;transform:rotate(-90deg) translate(-100%,0);transform-origin:0 0"><div class="t tv" style="transform:scaleX(0.7889);left:8.700000000000003px;top:0px;--w:21.299999999999997;font-family:'Liberation Serif',serif;font-size:14.5px;color:#3a3a3a;letter-spacing:1.6px">400</div></div></div>
<div style="left:200px;top:109px;width:821px;height:742px;background:#aaa"></div>
<div style="left:336px;top:109px;width:549px;height:742px;background:#fff"></div>
<svg style="left:0;top:0" width="1021" height="851"><rect x="363.5" y="134.5" width="494" height="691" fill="none" stroke="#9c9ac0"/><rect x="372.5" y="143.5" width="476" height="673" fill="none" stroke="#aaa8c6"/><rect x="414.5" y="202.5" width="392" height="555" fill="none" stroke="#b9b9c6"/><path d="M372.5 116V134" stroke="#9c9ac0"/><path d="M354 143.5H363" stroke="#9c9ac0"/><path d="M848.5 116V134" stroke="#9c9ac0"/><path d="M857 143.5H867" stroke="#9c9ac0"/><path d="M372.5 826V845" stroke="#9c9ac0"/><path d="M354 816.5H363" stroke="#9c9ac0"/><path d="M848.5 826V845" stroke="#9c9ac0"/><path d="M857 816.5H867" stroke="#9c9ac0"/><path d="M610.5 116V134" stroke="#9c9ac0"/><path d="M592 125.5H629" stroke="#9c9ac0"/><path d="M610.5 826V845" stroke="#9c9ac0"/><path d="M592 834.5H629" stroke="#9c9ac0"/><path d="M354.5 461V499" stroke="#9c9ac0"/><path d="M345 480.5H363" stroke="#9c9ac0"/><path d="M866.5 461V499" stroke="#9c9ac0"/><path d="M857 480.5H876" stroke="#9c9ac0"/><path d="M575.1 240.4 L576.3 242.5 L577.9 245.2 L579.8 248.4 L581.9 252.2 L584.0 256.2 L585.8 260.6 L587.6 265.5 L589.4 271.1 L591.3 277.0 L593.0 283.0 L594.7 288.8 L596.2 294.0 L597.5 298.7 L598.8 303.0 L599.9 307.1 L600.9 311.0 L601.9 314.7 L602.8 318.3 L603.7 321.7 L604.5 325.0 L605.2 328.2 L605.9 331.1 L606.6 333.9 L607.1 336.4 L607.7 338.6 L608.2 340.5 L608.6 342.3 L609.0 343.8 L609.3 345.2 L609.6 346.4 L609.9 347.6 L610.1 348.6 L610.2 349.5 L610.3 350.3 L610.5 350.9 L610.5 351.4 L614.3 350.6 L614.1 350.1 L614.0 349.5 L613.8 348.8 L613.6 347.8 L613.3 346.8 L613.0 345.6 L612.6 344.3 L612.1 342.9 L611.7 341.4 L611.1 339.7 L610.5 337.8 L609.9 335.6 L609.1 333.2 L608.4 330.5 L607.6 327.6 L606.7 324.5 L605.8 321.2 L604.8 317.7 L603.7 314.2 L602.7 310.5 L601.6 306.6 L600.4 302.5 L599.0 298.2 L597.6 293.6 L596.0 288.4 L594.3 282.7 L592.5 276.7 L590.6 270.7 L588.6 265.1 L586.8 260.2 L584.8 255.9 L582.6 251.8 L580.4 248.1 L578.4 244.9 L576.7 242.2 L575.5 240.2Z" fill="#000"/><path d="M631.4 460.9 L631.6 462.0 L631.8 463.6 L632.0 465.4 L632.3 467.3 L632.6 469.3 L632.8 471.1 L633.1 473.0 L633.3 475.1 L633.6 477.1 L633.8 479.0 L634.1 480.7 L634.2 481.8 L636.2 481.6 L636.0 480.4 L635.8 478.8 L635.6 476.9 L635.3 474.8 L635.1 472.7 L634.8 470.9 L634.5 469.0 L634.2 467.0 L633.9 465.1 L633.6 463.3 L633.4 461.8 L633.2 460.7Z" fill="#000"/><path d="M638.0 499.2 L638.1 501.6 L638.3 504.8 L638.5 508.6 L638.8 512.7 L639.1 516.6 L639.5 520.1 L639.9 523.1 L640.3 525.8 L640.8 528.5 L641.3 531.0 L641.8 533.6 L642.3 536.1 L642.8 538.9 L643.4 541.9 L643.9 544.9 L644.4 547.6 L644.9 549.9 L645.2 551.6 L646.4 551.4 L646.1 549.7 L645.7 547.4 L645.2 544.6 L644.7 541.7 L644.2 538.7 L643.7 535.9 L643.2 533.3 L642.7 530.7 L642.2 528.2 L641.8 525.6 L641.3 522.8 L640.9 519.9 L640.6 516.5 L640.3 512.6 L640.0 508.6 L639.8 504.7 L639.6 501.5 L639.4 499.2Z" fill="#000"/><path d="M584.3 322.0 L584.0 325.2 L583.5 329.7 L583.0 335.0 L582.5 340.7 L582.0 346.4 L581.7 351.6 L581.4 356.5 L581.3 361.5 L581.2 366.5 L581.1 371.3 L581.1 375.7 L581.2 379.8 L581.3 383.3 L581.5 386.5 L581.7 389.3 L582.0 391.9 L582.3 394.2 L582.5 396.2 L582.7 398.0 L582.9 399.5 L583.1 400.8 L583.2 401.8 L583.3 402.6 L583.4 403.3 L587.0 402.7 L586.9 402.1 L586.8 401.3 L586.6 400.3 L586.5 399.1 L586.3 397.6 L586.1 395.8 L585.9 393.8 L585.6 391.5 L585.3 389.0 L585.1 386.2 L584.8 383.1 L584.6 379.6 L584.5 375.7 L584.4 371.2 L584.3 366.5 L584.2 361.5 L584.2 356.5 L584.1 351.6 L584.2 346.5 L584.3 340.8 L584.4 335.1 L584.5 329.8 L584.6 325.3 L584.7 322.0Z" fill="#000"/><path d="M576.9 660.0 L576.9 660.7 L577.0 661.5 L577.0 662.4 L577.0 663.5 L577.1 664.7 L577.2 666.0 L577.3 667.4 L577.4 668.9 L577.6 670.5 L577.8 672.2 L578.0 674.1 L578.3 675.9 L578.5 677.8 L578.8 679.6 L579.1 681.6 L579.5 683.6 L580.0 685.8 L580.6 688.3 L581.4 690.9 L582.2 693.8 L583.1 696.8 L584.1 700.0 L585.2 703.2 L586.5 706.5 L587.9 710.0 L589.6 714.0 L591.4 718.0 L593.2 721.7 L594.7 724.9 L595.7 727.1 L596.7 726.7 L595.7 724.4 L594.3 721.2 L592.6 717.4 L590.9 713.4 L589.3 709.5 L587.9 705.9 L586.8 702.7 L585.9 699.5 L585.0 696.3 L584.1 693.3 L583.4 690.4 L582.8 687.7 L582.2 685.3 L581.7 683.2 L581.3 681.2 L580.9 679.3 L580.7 677.5 L580.5 675.7 L580.5 673.9 L580.6 672.2 L580.8 670.5 L581.1 668.9 L581.3 667.4 L581.4 666.0 L581.5 664.7 L581.5 663.5 L581.5 662.3 L581.5 661.4 L581.5 660.6 L581.5 660.0Z" fill="#000"/><path d="M604.1 740.7 L607.5 744.1 L608.3 743.3 L604.9 739.9Z" fill="#000"/><path d="M610.5 350 L614.3 350 L620.1 373.8 L615.2 379.9Z" fill="#000"/><path d="M618.2 396.3 L623.3 390.9 L626.1 409.7 L631 432.8 L632.2 445.6 L629.2 447.4 L624.3 423.1 L618.8 403.6Z" fill="#000"/><path d="M645.8 565 L648.8 565 L649.7 575.3 L644.3 578.3Z" fill="#000"/><path d="M643.6 594.7 L650.7 591.7 L652.5 610.5 L653.7 636.7 L644.6 636.7 L645.2 616Z" fill="#000"/><path d="M644 651.2 L653.7 651.2 L654.8 668.4 L656.9 682.6 L658.2 689.6 L649 695.3 L647.3 682.6 L645.2 668.4Z" fill="#000"/><path d="M654.3 710.3 L663.4 704.2 L670.2 723.6 L660.3 727.7Z" fill="#000"/><path d="M661.1 742.2 L671.7 738.4 L671.7 751.7 L668 762.3 L661.1 768.4 L652 771 L642.1 770.7 L635.3 766.1 L626.9 760.8 L623.1 758.1 L626.9 758.5 L637.6 762.3 L642.1 765.3 L649.7 765 L655.8 762.3 L659.6 756.2 L660.7 749.4Z" fill="#000"/><path d="M583.4 400 L587 400 L588.8 412.2 L585.2 416.4Z" fill="#000"/><path d="M587 435.3 L590.9 431.4 L592.5 448.6 L594.9 466.6 L590.1 469.9 L588.2 451Z" fill="#000"/><path d="M593.1 483.3 L599.5 479.6 L602.6 487.5 L602.8 496 L607.9 510.3 L597.7 521.9 L597.4 511.9 L593.7 497.3Z" fill="#000"/><path d="M595.8 544.4 L607.4 531.9 L606.5 548.6 L605.9 562.6 L594.9 565 L595.5 552Z" fill="#000"/><path d="M590.4 580.9 L602.6 577.2 L596.1 592.4 L589.7 610 L580.3 615.3 L582.2 602.1 L587 588.8Z" fill="#000"/><path d="M576.6 633.8 L584.7 629.6 L583 640.5 L576.2 640.5Z" fill="#000"/><path d="M576.8 654.5 L581.7 654.5 L581.4 666 L577 666Z" fill="#000"/></svg>
<div class="t" style="left:373px;top:826px;color:#666"><span style="font-size:6px">nb</span></div>
<div style="left:1021px;top:94px;width:12px;height:757px;background:#c6c9cc;border-left:1px solid #b4b7ba"></div>
<div style="left:1021px;top:95px;width:12px;height:12px;background:linear-gradient(#eceef0,#d0d3d6);border:1px solid #a9acaf;border-radius:2px"></div>
<svg style="left:1024px;top:99px;" width="7" height="4" viewBox="0 0 7 4"><path d="M0 4H7L3.5 0Z" fill="#333"/></svg>
<div style="left:1021px;top:331px;width:12px;height:284px;background:linear-gradient(90deg,#e0e3e6,#ccd0d3);border:1px solid #a9acaf;border-radius:2px"></div>
<svg style="left:1023px;top:468px;" width="8" height="6" viewBox="0 0 8 6"><path d="M0 0.5H8M0 2.5H8M0 4.5H8" stroke="#888" stroke-width="0.9"/></svg>
<div style="left:1021px;top:839px;width:12px;height:12px;background:linear-gradient(#eceef0,#d0d3d6);border:1px solid #a9acaf;border-radius:2px"></div>
<svg style="left:1024px;top:843px;" width="7" height="4" viewBox="0 0 7 4"><path d="M0 0H7L3.5 4Z" fill="#333"/></svg>
<div style="left:186px;top:851px;width:848px;height:13px;background:#c9ccd0;border-top:1px solid #a0a3a6"></div>
<div style="left:187px;top:852px;width:98px;height:11px;background:#d4d7db;border:1px solid #b0b3b6"></div>
<svg style="left:213px;top:852px;" width="72" height="11" viewBox="0 0 72 11"><path d="M0 11 L72 0 V11Z" fill="#8f9296"/></svg>
<div style="left:212px;top:852px;width:2px;height:11px;background:#b8bbbe"></div>
<div class="t" style="transform:scaleX(0.9583);left:269px;top:853px;--w:14;font-size:10.5px;color:#111">7.8</div>
<svg style="left:289px;top:852px;" width="14" height="12" viewBox="0 0 14 12"><circle cx="6" cy="5.5" r="4.5" fill="#f4f4f4" stroke="#333" stroke-width="1.2"/><path d="M3.5 5.5H8.5" stroke="#333" stroke-width="1.3"/><path d="M9 9L12 12" stroke="#333" stroke-width="1.6"/></svg>
<svg style="left:309px;top:852px;" width="14" height="12" viewBox="0 0 14 12"><circle cx="6" cy="5.5" r="4.5" fill="#f4f4f4" stroke="#333" stroke-width="1.2"/><path d="M3.5 5.5H8.5M6 3V8" stroke="#333" stroke-width="1.3"/><path d="M9 9L12 12" stroke="#333" stroke-width="1.6"/></svg>
<div style="left:330px;top:852px;width:12px;height:11px;background:#fff;border:2px solid #222;box-shadow:inset 0 0 0 1px #fff,inset 0 0 0 4px #222"></div>
<div style="left:346px;top:852px;width:99px;height:11px;background:#d4d7db;border:1px solid #b0b3b6"></div>
<svg style="left:346px;top:852px;" width="99" height="11" viewBox="0 0 99 11"><rect x="0" y="0" width="99" height="11" fill="#d6d8db"/><rect x="1" y="0" width="2.5" height="11" fill="#8c8f92"/><path d="M32 11 L48 11 L48 3Z" fill="#8c8f92"/><rect x="48" y="0" width="3" height="11" fill="#bfc2c5"/><path d="M52 11 L62 0 L77 0 L99 11Z" fill="#8c8f92"/></svg>
<div class="t" style="transform:scaleX(0.8898);left:352px;top:853px;--w:13;font-size:10.5px;color:#111">0.0</div>
<svg style="left:449px;top:852px;" width="14" height="12" viewBox="0 0 14 12"><path d="M4 9 A4.5 4.5 0 1 1 10 10" stroke="#222" stroke-width="2" fill="none"/><path d="M0 5 L4.5 10 L7 4Z" fill="#222"/></svg>
<svg style="left:468px;top:852px;" width="14" height="12" viewBox="0 0 14 12"><path d="M10 9 A4.5 4.5 0 1 0 4 10" stroke="#222" stroke-width="2" fill="none"/><path d="M14 5 L9.5 10 L7 4Z" fill="#222"/></svg>
<svg style="left:490px;top:852px;" width="13" height="12" viewBox="0 0 13 12"><circle cx="6.5" cy="6" r="4.5" fill="none" stroke="#777" stroke-width="1.3" stroke-dasharray="1.5 1.2"/></svg>
<div style="left:507px;top:852px;width:514px;height:11px;background:#c0c3c6"></div>
<div style="left:507px;top:852px;width:11px;height:11px;background:linear-gradient(#eceef0,#d0d3d6);border:1px solid #a9acaf;border-radius:2px"></div>
<svg style="left:510px;top:854px;" width="4" height="7" viewBox="0 0 4 7"><path d="M4 0V7L0 3.5Z" fill="#333"/></svg>
<div style="left:650px;top:852px;width:226px;height:11px;background:linear-gradient(#e6e9ec,#d0d3d6);border:1px solid #a9acaf;border-radius:3px"></div>
<svg style="left:759px;top:854px;" width="7" height="7" viewBox="0 0 7 7"><path d="M0.5 0V7M3 0V7M5.5 0V7" stroke="#777" stroke-width="0.9"/></svg>
<div style="left:1010px;top:852px;width:11px;height:11px;background:linear-gradient(#eceef0,#d0d3d6);border:1px solid #a9acaf;border-radius:2px"></div>
<svg style="left:1014px;top:854px;" width="4" height="7" viewBox="0 0 4 7"><path d="M0 0V7L4 3.5Z" fill="#333"/></svg>
<div style="left:1021px;top:852px;width:12px;height:12px;background:#d4d7da"></div>
<div style="left:186px;top:864px;width:848px;height:117px;background:#d9dce1"></div>
<div style="left:186px;top:866px;width:828px;height:17px;background:linear-gradient(#d6d6d6,#c2c2c2);border:1px solid #a9a9a9"></div>
<div style="left:186px;top:866px;width:19px;height:16px;background:linear-gradient(#dadada,#c2c2c2);border:1px solid #a6a6a6"><svg style="left:4px;top:4px;" width="11" height="8" viewBox="0 0 11 8"><path d="M0 0.5L3.5 4L0 7.5Z" fill="#8d8f93"/><rect x="5" y="0" width="6" height="1.6" fill="#8d8f93"/><rect x="5" y="3.2" width="6" height="1.6" fill="#8d8f93"/><rect x="5" y="6.4" width="6" height="1.6" fill="#8d8f93"/></svg></div>
<div style="left:204px;top:867px;width:54px;height:19px;background:#dcdfe3;border:1px solid #a4a6a9;border-bottom:none"></div>
<svg style="left:214px;top:868px;" width="9" height="18" viewBox="0 0 9 18"><path d="M4.5 0 L7 6 L7.5 12 L6 15 L3 15 L1.5 12 L2 6 Z" fill="#ddd" stroke="#555" stroke-width="0.9"/><rect x="0.5" y="15.5" width="8" height="2.5" fill="#222"/></svg>
<div class="t" style="transform:scaleX(0.7576);left:231px;top:873px;--w:25;font-size:10.5px;color:#333">ツール</div>
<div style="left:186px;top:887px;width:828px;height:29px;border:1px solid #9ea1a5;border-right:1px solid #9ea1a5"></div>
<div style="left:400px;top:889px;width:25px;height:24px;background:linear-gradient(#c8dbe8,#b2c7d6);border:1px solid #93a6b4;border-radius:2px"></div>
<div style="left:186px;top:916px;width:828px;height:28px;border:1px solid #9ea1a5"></div>
<svg style="left:190px;top:890px;" width="22" height="22" viewBox="0 0 22 22"><circle cx="10" cy="12" r="7.5" fill="none" stroke="#333" stroke-width="1.6" stroke-dasharray="2.2 1.6"/><path d="M10 4.5 A7.5 7.5 0 0 1 17.5 11" stroke="#333" stroke-width="2" fill="none"/><path d="M14.5 10 L20 9.5 L17.5 14Z" fill="#222"/></svg>
<svg style="left:216px;top:890px;" width="22" height="22" viewBox="0 0 22 22"><path d="M1 11 L8 5 L16 11 L9 17Z" fill="#fff" stroke="#333" stroke-width="1.2"/><path d="M12 9 L20 3" stroke="#222" stroke-width="2.2"/><path d="M9 12 L11 5 L16 10Z" fill="#222"/></svg>
<svg style="left:243px;top:890px;" width="22" height="22" viewBox="0 0 22 22"><path d="M1 1 L9 4 L6 6 L10 10 L8 12 L4 8 L2 11Z" fill="#222"/><path d="M14 6V21M7 14H21" stroke="#222" stroke-width="2"/><path d="M14 4 L11 8H17Z M14 22 L11 18H17Z M5 14 L9 11V17Z M22 14 L18 11V17Z" fill="#222"/></svg>
<svg style="left:269px;top:890px;" width="22" height="22" viewBox="0 0 22 22"><ellipse cx="11" cy="10" rx="9.5" ry="5.5" transform="rotate(-12 11 10)" fill="none" stroke="#333" stroke-width="1.6"/><path d="M4 14 Q2 18 5 18" stroke="#333" stroke-width="1.3" fill="none"/></svg>
<svg style="left:297px;top:890px;" width="22" height="22" viewBox="0 0 22 22"><ellipse cx="10.5" cy="11" rx="9.5" ry="5.5" fill="none" stroke="#333" stroke-width="1.3" stroke-dasharray="2 1.5"/></svg>
<svg style="left:324px;top:890px;" width="22" height="22" viewBox="0 0 22 22"><rect x="1" y="4" width="19" height="14" fill="none" stroke="#333" stroke-width="1.4" stroke-dasharray="2.2 1.6"/></svg>
<svg style="left:350px;top:890px;" width="22" height="22" viewBox="0 0 22 22"><path d="M9 1 L10 7 L16 5 L11 9 L17 12 L10.5 11.5 L9 18 L8 11.5 L1 12 L7 9 L2 5 L8 7Z" fill="#444"/><circle cx="9" cy="9" r="3" fill="#fff"/><path d="M11 11 L19 20" stroke="#444" stroke-width="2.4"/><path d="M11.5 11.5 L19 19.5" stroke="#ddd" stroke-width="1"/></svg>
<svg style="left:378px;top:890px;" width="17" height="22" viewBox="0 0 17 22"><path d="M2 5 L7 1 L14 14 L15 20 L10 16Z" fill="#fff" stroke="#222" stroke-width="1.2"/><path d="M4 4 L11 16M6 2.5 L13 15" stroke="#555" stroke-width="0.8"/><path d="M12.5 17 L15 20.5 L11.5 19Z" fill="#222"/></svg>
<svg style="left:404px;top:890px;" width="18" height="22" viewBox="0 0 18 22"><circle cx="5" cy="4.5" r="3.6" fill="#888" stroke="#333" stroke-width="0.9"/><path d="M3.5 8 L8 6.5 L14 16 L15.5 21 L10.5 18Z" fill="#f2f2f2" stroke="#222" stroke-width="1"/><path d="M7 10 L12.5 17.5" stroke="#555"/><path d="M13 17 L16 21.5 L11.5 19.5Z" fill="#111"/></svg>
<svg style="left:431px;top:890px;" width="18" height="22" viewBox="0 0 18 22"><defs><linearGradient id="bg1" x1="0" x2="1"><stop offset="0" stop-color="#fff"/><stop offset="1" stop-color="#999"/></linearGradient></defs><path d="M1.5 4 Q8 0 15 3.5 L14 10 L11 16 L6 16 L3 10Z" fill="url(#bg1)" stroke="#222" stroke-width="1.1"/><path d="M2 5.5 Q8 2.5 14.5 5" stroke="#444" stroke-width="2.4" fill="none"/><path d="M3 9.5 Q8.5 8 14 9.5" stroke="#666" stroke-width="1.4" fill="none"/><path d="M6.5 16 L9.5 21.5 L11 16Z" fill="#333"/></svg>
<svg style="left:457px;top:890px;" width="22" height="22" viewBox="0 0 22 22"><path d="M7 9 L15 5 L20 13 L12 18Z" fill="#f0f0f0" stroke="#222" stroke-width="1.3"/><path d="M1 17 Q3 11 8 10" stroke="#111" stroke-width="3" fill="none"/><path d="M13 2 L17 1 L16 8" stroke="#222" stroke-width="1.6" fill="#bbb"/></svg>
<svg style="left:483px;top:890px;" width="22" height="22" viewBox="0 0 22 22"><ellipse cx="10.5" cy="11.5" rx="9" ry="5.8" fill="none" stroke="#222" stroke-width="1.8"/></svg>
<svg style="left:510px;top:890px;" width="22" height="22" viewBox="0 0 22 22"><rect x="1.5" y="5" width="17.5" height="12" fill="none" stroke="#222" stroke-width="1.8"/></svg>
<svg style="left:537px;top:890px;" width="20" height="22" viewBox="0 0 20 22"><path d="M1 20 L18 2" stroke="#222" stroke-width="1.8"/></svg>
<svg style="left:565px;top:890px;" width="20" height="22" viewBox="0 0 20 22"><path d="M1 18 Q14 17 16 2" stroke="#222" stroke-width="1.6" fill="none"/></svg>
<svg style="left:590px;top:890px;" width="22" height="22" viewBox="0 0 22 22"><path d="M0.5 21 V8 L9.5 14.5Z" fill="#222"/><rect x="8.5" y="1" width="4" height="14" fill="#fff" stroke="#333" stroke-width="1"/><path d="M12.5 14.5 H20" stroke="#333" stroke-width="1.4"/></svg>
<svg style="left:616px;top:890px;" width="20" height="22" viewBox="0 0 20 22"><ellipse cx="6" cy="17" rx="5.5" ry="3" fill="#a8d4f0"/><circle cx="5" cy="14" r="3.5" fill="#fff" stroke="#333"/><path d="M6 13 L17 2" stroke="#333" stroke-width="3.6"/><path d="M6 13 L17 2" stroke="#ccc" stroke-width="1.5"/></svg>
<svg style="left:643px;top:890px;" width="20" height="22" viewBox="0 0 20 22"><path d="M5 3 L16 3 L17 6 L12 20 L2 18 L1 14Z" fill="#f4f4f4" stroke="#222" stroke-width="1.2"/><path d="M1 14 L12 16 L17 6" stroke="#222" stroke-width="1" fill="none"/><path d="M2 18 L12 20 L12 16 L1 14Z" fill="#ccc"/></svg>
<svg style="left:668px;top:890px;" width="22" height="22" viewBox="0 0 22 22"><path d="M9 12 L19 1" stroke="#333" stroke-width="3.5"/><path d="M9 12 L19 1" stroke="#ccc" stroke-width="1.3"/><circle cx="7" cy="14" r="4.5" fill="#e8e8e8" stroke="#333"/><path d="M12 15 L14 17 L12 19M15 15 L17 17 L15 19M18 15 L20 17 L18 19" stroke="#222" stroke-width="1.3" fill="none"/></svg>
<svg style="left:697px;top:890px;" width="20" height="22" viewBox="0 0 20 22"><path d="M1 2 L7 8M12 1 L8 7" stroke="#333"/><path d="M3 9 Q10 6 16 10 L15 17 Q8 20 3 16Z" fill="#ddd" stroke="#333" stroke-width="1.2"/><path d="M14 16 L19 20" stroke="#333"/></svg>
<svg style="left:722px;top:890px;" width="20" height="22" viewBox="0 0 20 22"><defs><linearGradient id="gg" x1="0" y1="0" x2="1" y2="1"><stop offset="0" stop-color="#fff"/><stop offset="0.6" stop-color="#333"/><stop offset="1" stop-color="#000"/></linearGradient></defs><rect x="1.5" y="2.5" width="16" height="16" fill="url(#gg)" stroke="#222"/></svg>
<svg style="left:750px;top:890px;" width="18" height="22" viewBox="0 0 18 22"><path d="M2 2 L16 17 H2Z" fill="#7fc6ee" stroke="#1a4a80" stroke-width="1.2"/><path d="M5 11 L8 14 H5Z" fill="none" stroke="#1a4a80"/></svg>
<svg style="left:777px;top:890px;" width="21" height="22" viewBox="0 0 21 22"><path d="M10 2 C 4 2, 1 5, 1 9 C 1 13, 4 16, 9 16 L 11 20 L 12 16 C 16 15, 19 12, 19 9 C 19 5, 16 2, 10 2Z" fill="#fff" stroke="#333" stroke-width="1.1"/></svg>
<svg style="left:803px;top:890px;" width="18" height="22" viewBox="0 0 18 22"><rect x="1" y="3" width="16" height="16" fill="#f4f4f4" stroke="#333" stroke-width="1.2"/><path d="M1 13 L17 8 M1 16 L17 11" stroke="#333" stroke-width="1.2"/></svg>
<svg style="left:831px;top:890px;" width="17" height="22" viewBox="0 0 17 22"><rect x="1" y="1" width="15" height="20" fill="#eee" stroke="#333"/><path d="M1 5H16M4 8H13V17H4Z M8 8V13H13" stroke="#333" fill="none"/></svg>
<svg style="left:856px;top:890px;" width="20" height="22" viewBox="0 0 20 22"><path d="M6 14 L17 3" stroke="#333" stroke-width="3.5"/><path d="M6 14 L17 3" stroke="#ccc" stroke-width="1.3"/><circle cx="5" cy="15" r="4" fill="#f0f0f0" stroke="#333"/><path d="M2 19 Q7 21 11 19" stroke="#111" stroke-width="2" fill="none"/></svg>
<svg style="left:882px;top:890px;" width="22" height="22" viewBox="0 0 22 22"><defs><linearGradient id="dg" x1="0" x2="1"><stop offset="0" stop-color="#111"/><stop offset="0.5" stop-color="#666"/><stop offset="1" stop-color="#111"/></linearGradient></defs><path d="M6 3 Q1 11 1.5 15 Q2 19 6 19 Q10 19 10.5 15 Q11 11 6 3Z" fill="url(#dg)"/><path d="M15 3 Q10 11 10.5 15 Q11 19 15 19 Q19 19 19.5 15 Q20 11 15 3Z" fill="#fff" stroke="#222" stroke-width="1.3"/></svg>
<div class="t" style="left:909px;top:888px;font-family:'Liberation Serif',serif;font-size:26px;font-weight:bold;color:#222">A</div>
<svg style="left:195px;top:919px;" width="13" height="22" viewBox="0 0 13 22"><circle cx="9.5" cy="3.5" r="3" fill="#444"/><path d="M8 6 L11 7 L5 19 L2 21 L2.5 18Z" fill="#eee" stroke="#222" stroke-width="1.1"/><path d="M8.5 5.5L11.5 7.5" stroke="#222" stroke-width="2"/></svg>
<div style="left:187px;top:945px;width:274px;height:21px;background:#b8d4e8;border:1px solid #9cc0dc"></div>
<div style="left:189px;top:947px;width:270px;height:17px;background:#000;border:1px solid #222;box-shadow:inset 0 0 0 1px #fff"></div>
<div style="left:462px;top:946px;width:274px;height:19px;background:#fff;border:1px solid #a9acaf"></div>
<div style="left:739px;top:946px;width:273px;height:19px;background:repeating-conic-gradient(#808080 0 25%,#fff 0 50%) 0 0/10px 10px;border:1px solid #a9acaf"></div>
<div style="left:1013px;top:864px;width:21px;height:117px;background:#cdd0d4;border-left:1px solid #b9bcbf"></div>
<svg style="left:1015px;top:969px;" width="14" height="7" viewBox="0 0 14 7"><path d="M1 1 L7 5 L13 1" stroke="#8a8c90" stroke-width="2" fill="none"/></svg>
<div style="left:0px;top:981px;width:1294px;height:6px;background:linear-gradient(#a9abad,#b9bbbd 40%,#b4b6b8)"></div>
<div style="left:1033px;top:46px;width:15px;height:935px;background:#cfd2d5;border-left:1px solid #aeb1b4;border-right:1px solid #aeb1b4"></div>
<div style="left:1033px;top:45px;width:256px;height:1px;background:#a9abad"></div>
<div style="left:1033px;top:46px;width:15px;height:19px;background:linear-gradient(#d7d7d7,#c9c9c9);border-left:1px solid #aeb1b4"></div>
<div style="left:1033px;top:65px;width:15px;height:1px;background:#a9abad"></div>
<div style="left:1048px;top:46px;width:241px;height:19px;background:linear-gradient(#d7d7d7,#c9c9c9)"></div>
<div style="left:1048px;top:65px;width:241px;height:1px;background:#a9abad"></div>
<svg style="left:1036px;top:49px;" width="25" height="14" viewBox="0 0 25 14"><path d="M0 7 L5.5 0.5 L4.3 7 L5.5 13.5Z M5 7 L10.5 0.5 L9.3 7 L10.5 13.5Z" fill="#7d7f82"/><path d="M19.5 7 L14 0.5 L15.2 7 L14 13.5Z M24.5 7 L19 0.5 L20.2 7 L19 13.5Z" fill="#7d7f82"/></svg>
<div style="left:1289px;top:22px;width:5px;height:965px;background:#c6c7c9;border-left:1px solid #b0b2b4"></div>
<div style="left:1048px;top:66px;width:241px;height:915px;background:#d9dce1"></div>
<div style="left:1048px;top:67px;width:241px;height:17px;background:linear-gradient(#d6d6d6,#c2c2c2);border:1px solid #a9a9a9;border-bottom-color:#b4b4b4"></div>
<div style="left:1048px;top:68px;width:19px;height:16px;background:linear-gradient(#dadada,#c2c2c2);border:1px solid #a6a6a6"><svg style="left:4px;top:4px;" width="11" height="8" viewBox="0 0 11 8"><path d="M0 0.5L3.5 4L0 7.5Z" fill="#8d8f93"/><rect x="5" y="0" width="6" height="1.6" fill="#8d8f93"/><rect x="5" y="3.2" width="6" height="1.6" fill="#8d8f93"/><rect x="5" y="6.4" width="6" height="1.6" fill="#8d8f93"/></svg></div>
<div style="left:1067px;top:69px;width:93px;height:19px;background:#dcdfe3;border:1px solid #a4a6a9;border-bottom:none;border-radius:2px 2px 0 0"></div>
<svg style="left:1071px;top:70px;" width="19" height="16" viewBox="0 0 19 16"><path d="M1 7 L5 12 L17 1 L6 9Z" fill="#d8141c"/><rect x="1" y="12" width="16" height="3" fill="#222"/></svg>
<div class="t" style="transform:scaleX(0.6263);left:1094px;top:73px;--w:62;font-size:10.5px;color:#333">レイヤープロパティ</div>
<div style="left:1048px;top:88px;width:241px;height:1px;background:#8d9195"></div>
<div style="left:1048px;top:89px;width:1px;height:263px;background:#8d9195"></div>
<div style="left:1276px;top:89px;width:13px;height:263px;background:#bcbfc2;border-left:1px solid #a9acaf"></div>
<div style="left:1277px;top:90px;width:11px;height:8px;background:#aeb1b4"></div>
<div style="left:1054px;top:98px;width:5px;height:1px;background:#bfc2c6"></div>
<div class="t" style="transform:scaleX(0.9583);left:1061px;top:92px;--w:23;font-size:12px">効果</div>
<div style="left:1089px;top:98px;width:184px;height:1px;background:#bfc2c6"></div>
<div style="left:1163px;top:106px;width:111px;height:20px;background:linear-gradient(#e6e8eb,#cfd2d6);border:1px solid #a4a7ab;border-radius:3px"></div>
<div style="left:1167px;top:108px;width:16px;height:16px;border-radius:50%;background:radial-gradient(#444 45%,#fff 50%,#fff 85%,#ccc 100%)"></div>
<div style="left:1191px;top:109px;width:16px;height:16px;border-radius:50%;background:#5aaeea"></div>
<div style="left:1193px;top:107px;width:14px;height:14px;border-radius:50%;border:1.5px solid #333;background:#7cc4f4"></div>
<div style="left:1215px;top:108px;width:16px;height:16px;background:repeating-conic-gradient(#111 0 25%,#fff 0 50%) 0 0/4px 4px"></div>
<div style="left:1243px;top:111px;width:12px;height:11px;background:#fff;border:1px solid #666"></div>
<div style="left:1239px;top:107px;width:13px;height:12px;background:#88ccf6;border:1px solid #4f9ad0"></div>
<svg style="left:1262px;top:114px;" width="8" height="5" viewBox="0 0 8 5"><path d="M0 0H8L4 5Z" fill="#333"/></svg>
<div style="left:1054px;top:135px;width:5px;height:1px;background:#bfc2c6"></div>
<div class="t" style="transform:scaleX(0.9722);left:1061px;top:129px;--w:35;font-size:12px">表現色</div>
<div style="left:1102px;top:135px;width:171px;height:1px;background:#bfc2c6"></div>
<div style="left:1066px;top:147px;width:155px;height:19px;background:linear-gradient(#e6e8eb,#cfd2d6);border:1px solid #a4a7ab;border-radius:3px"></div>
<svg style="left:1109px;top:149px;" width="14" height="14" viewBox="0 0 14 14"><rect x="0.5" y="0.5" width="13" height="13" fill="#fff" stroke="#111"/><path d="M0.5 0.5H13.5L0.5 13.5Z" fill="#111"/></svg>
<div class="t" style="transform:scaleX(0.7083);left:1130px;top:151px;--w:34;font-size:11.5px">モノクロ</div>
<svg style="left:1209px;top:155px;" width="8" height="5" viewBox="0 0 8 5"><path d="M0 0H8L4 5Z" fill="#333"/></svg>
<div style="left:1223px;top:147px;width:24px;height:19px;background:#c4d8e6;border:1px solid #9db6c8;border-radius:2px"></div>
<div style="left:1229px;top:150px;width:13px;height:13px;background:#000;border:1px solid #444"></div>
<div style="left:1249px;top:147px;width:24px;height:19px;background:#c4d8e6;border:1px solid #9db6c8;border-radius:2px"></div>
<div style="left:1254px;top:150px;width:13px;height:13px;background:#fff;border:1px solid #999"></div>
<div style="left:1048px;top:351px;width:241px;height:1px;background:#8d9195"></div>
<div style="left:1048px;top:352px;width:241px;height:2px;background:#aeb1b4"></div>
<div style="left:1048px;top:355px;width:241px;height:17px;background:linear-gradient(#d6d6d6,#c2c2c2);border:1px solid #a9a9a9"></div>
<div style="left:1048px;top:355px;width:19px;height:16px;background:linear-gradient(#dadada,#c2c2c2);border:1px solid #a6a6a6"><svg style="left:4px;top:4px;" width="11" height="8" viewBox="0 0 11 8"><path d="M0 0.5L3.5 4L0 7.5Z" fill="#8d8f93"/><rect x="5" y="0" width="6" height="1.6" fill="#8d8f93"/><rect x="5" y="3.2" width="6" height="1.6" fill="#8d8f93"/><rect x="5" y="6.4" width="6" height="1.6" fill="#8d8f93"/></svg></div>
<div style="left:1067px;top:357px;width:59px;height:15px;background:linear-gradient(#cfd0d2,#bcbdbf);border:1px solid #a4a6a9"></div>
<svg style="left:1071px;top:358px;" width="16" height="13" viewBox="0 0 16 13"><path d="M1 3 Q8 -1 15 3 Q8 7 1 3Z M1 7 Q8 3 15 7 Q8 11 1 7Z M1 11 Q8 7 15 11" fill="none" stroke="#999" stroke-width="1.1"/></svg>
<div class="t" style="transform:scaleX(0.6818);left:1093px;top:360px;--w:30;font-size:10.5px;color:#9c9ea1">レイヤー</div>
<div style="left:1127px;top:356px;width:64px;height:20px;background:#dcdfe3;border:1px solid #a4a6a9;border-bottom:none"></div>
<svg style="left:1130px;top:357px;" width="20" height="19" viewBox="0 0 20 19"><rect x="0" y="0" width="9.5" height="19" fill="#fff"/><rect x="9.5" y="0" width="10.5" height="19" fill="#111"/><path d="M9.5 15 A5 5 0 0 1 8.5 5.2" stroke="#111" stroke-width="2.4" fill="none"/><path d="M6 1.5 L11.5 5.5 L6.5 8.5Z" fill="#111"/><path d="M10.5 5 A5 5 0 0 1 10.5 14.8" stroke="#fff" stroke-width="2.4" fill="none"/><path d="M13 11 L8 14.5 L13 18Z" fill="#fff"/></svg>
<div class="t" style="transform:scaleX(0.6);left:1153px;top:361px;--w:33;font-size:10.5px;color:#333">ヒストリー</div>
<div style="left:1048px;top:376px;width:241px;height:1px;background:#8d9195"></div>
<div style="left:1049px;top:377px;width:1px;height:604px;background:#8d9195"></div>
<div style="left:1050px;top:377px;width:1px;height:604px;background:#b4b7ba"></div>
<div style="left:1276px;top:377px;width:13px;height:604px;background:#bcbfc2;border-left:1px solid #a9acaf"></div>
<div style="left:1277px;top:378px;width:11px;height:8px;background:#aeb1b4"></div>
<div class="t" style="transform:scaleX(0.8333);left:1057px;top:382px;--w:70;font-size:11.5px">新規キャンバス</div>
<div style="left:1051px;top:400px;width:225px;height:1px;background:#8f9397"></div>
<div class="t" style="transform:scaleX(0.8816);left:1057px;top:406px;--w:77;font-size:11.5px">ペン/ペン/Gペン</div>
<div style="left:1051px;top:424px;width:225px;height:1px;background:#8f9397"></div>
<div class="t" style="transform:scaleX(0.8816);left:1057px;top:430px;--w:77;font-size:11.5px">ペン/ペン/Gペン</div>
<div style="left:1051px;top:448px;width:225px;height:1px;background:#8f9397"></div>
<div style="left:1051px;top:449px;width:225px;height:23px;background:linear-gradient(#c8dbe8,#aec2d1)"></div>
<div class="t" style="transform:scaleX(0.9099);left:1057px;top:454px;--w:115;font-size:11.5px">消しゴム/消しゴム/硬め</div>
<div style="left:1051px;top:472px;width:225px;height:1px;background:#8f9397"></div>
<div style="left:1048px;top:980px;width:241px;height:1px;background:#8d9195"></div><script>(function(){var els=document.querySelectorAll('.t'),W=[],i,e,w;for(i=0;i<els.length;i++){e=els[i];w=parseFloat(getComputedStyle(e).getPropertyValue('--w'));W.push(w);if(w)e.style.transform='none';}for(i=0;i<els.length;i++){e=els[i];w=W[i];if(!w)continue;var r=e.classList.contains('tv')?e.offsetWidth:e.getBoundingClientRect().width;if(r>0){e.style.transform='scaleX('+(w/r).toFixed(4)+')';}}})();</script></body></html>
